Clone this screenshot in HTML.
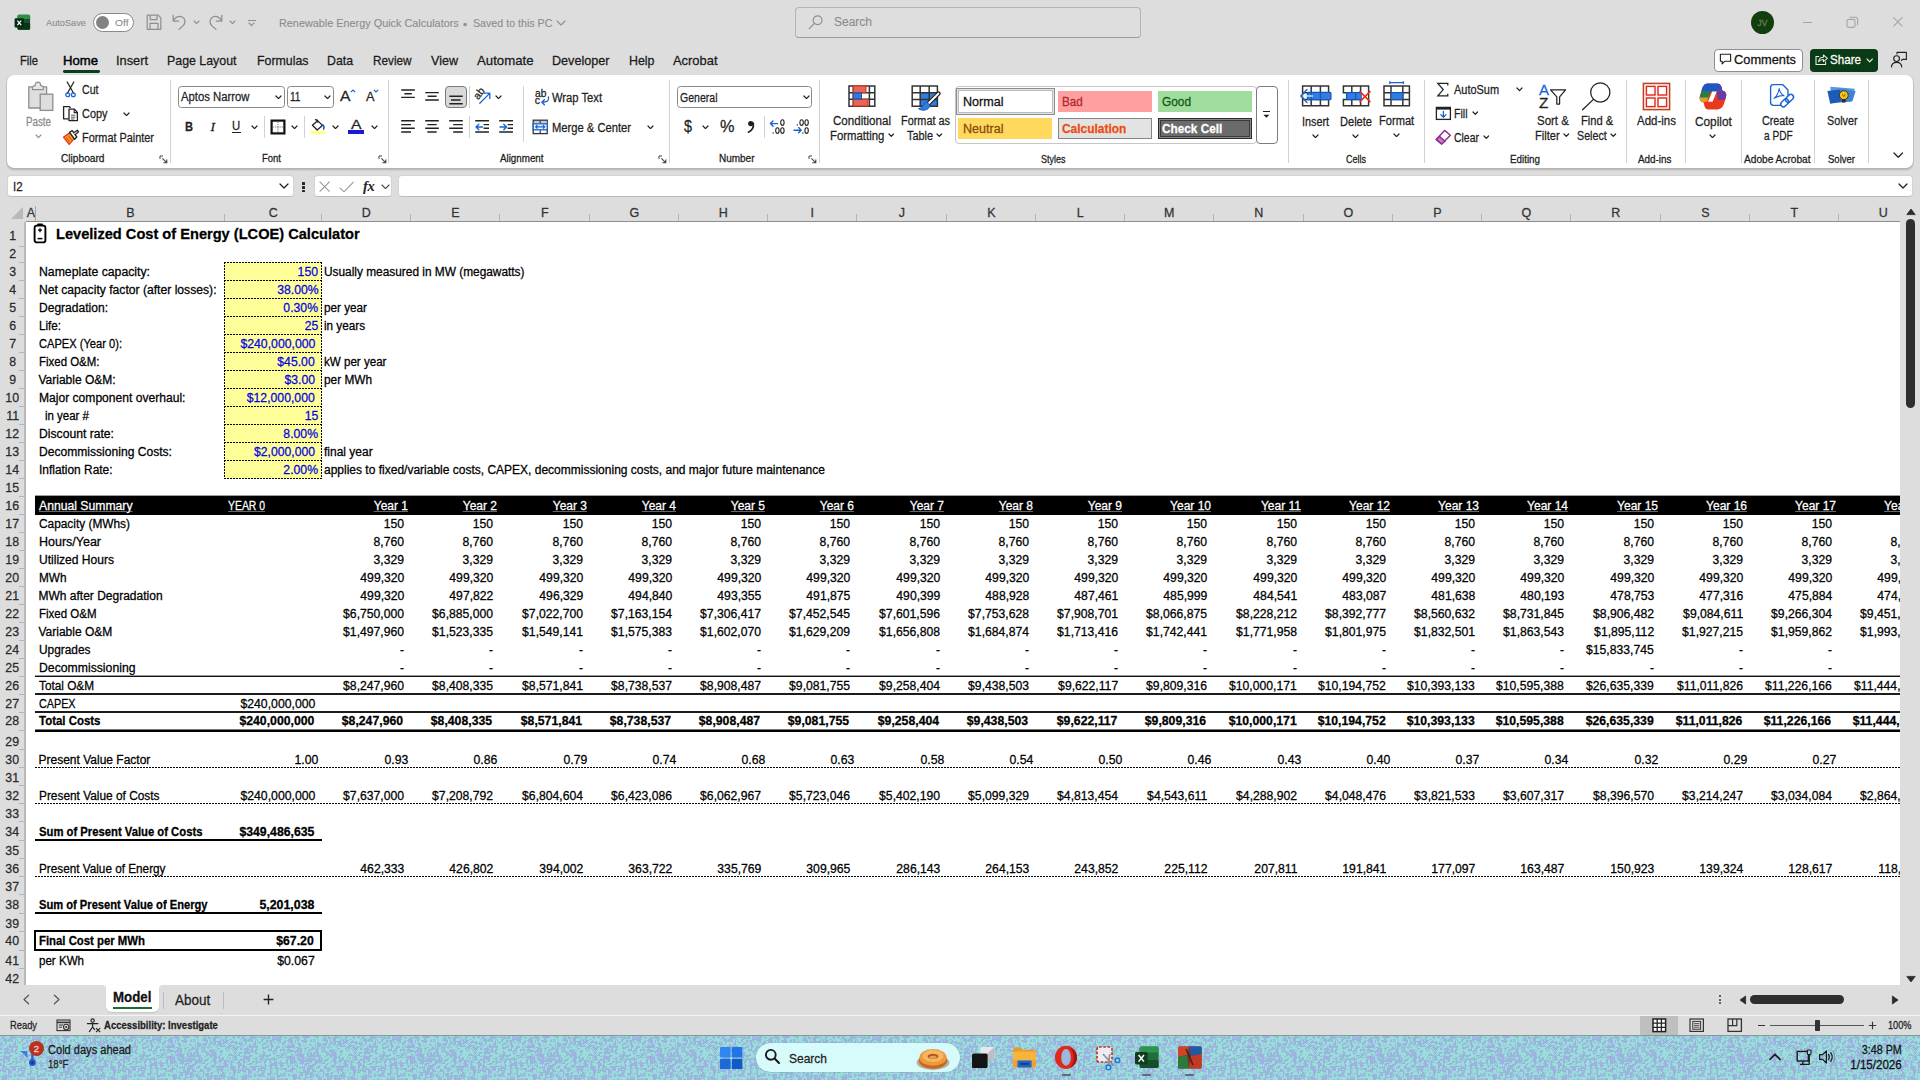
<!DOCTYPE html>
<html><head><meta charset="utf-8"><title>Renewable Energy Quick Calculators - Excel</title>
<style>
html,body{margin:0;padding:0}
body{width:1920px;height:1080px;overflow:hidden;position:relative;background:#dddddd;font-family:"Liberation Sans",sans-serif;color:#000}
.t{position:absolute;white-space:nowrap;line-height:1;display:block;-webkit-text-stroke:0.26px currentColor}
.b{position:absolute;box-sizing:border-box;display:block}
.s{position:absolute;overflow:hidden}
</style></head><body>

<div class="b" style="left:25px;top:222px;width:1875px;height:763px;background:#fff"></div>
<div class="b" style="left:0px;top:203px;width:1920px;height:19px;background:#dddddd"></div>
<div class="b" style="left:0px;top:221px;width:26px;height:764px;background:#dddddd"></div>
<div class="b" style="left:24px;top:222px;width:2px;height:763px;background:#b9b9b9"></div>
<div class="b" style="left:26px;top:221px;width:1874px;height:1px;background:#8e8e8e"></div>
<svg class="b" style="left:10px;top:206px" width="14" height="14" viewBox="0 0 14 14"><path d="M13 1 L13 13 L1 13 Z" fill="#b9b9b9"/></svg>
<span class="t" style="left:26.83px;top:207.02px;font-size:12.5px;color:#333">A</span>
<div class="b" style="left:35px;top:214px;width:1px;height:7px;background:#b4b4b4"></div>
<span class="t" style="left:126.13px;top:207.02px;font-size:12.5px;color:#333">B</span>
<div class="b" style="left:224px;top:214px;width:1px;height:7px;background:#b4b4b4"></div>
<span class="t" style="left:268.79px;top:207.02px;font-size:12.5px;color:#333">C</span>
<div class="b" style="left:321px;top:214px;width:1px;height:7px;background:#b4b4b4"></div>
<span class="t" style="left:361.79px;top:207.02px;font-size:12.5px;color:#333">D</span>
<div class="b" style="left:410px;top:214px;width:1px;height:7px;background:#b4b4b4"></div>
<span class="t" style="left:451.13px;top:207.02px;font-size:12.5px;color:#333">E</span>
<div class="b" style="left:499px;top:214px;width:1px;height:7px;background:#b4b4b4"></div>
<span class="t" style="left:540.98px;top:207.02px;font-size:12.5px;color:#333">F</span>
<div class="b" style="left:589px;top:214px;width:1px;height:7px;background:#b4b4b4"></div>
<span class="t" style="left:629.44px;top:207.02px;font-size:12.5px;color:#333">G</span>
<div class="b" style="left:678px;top:214px;width:1px;height:7px;background:#b4b4b4"></div>
<span class="t" style="left:718.79px;top:207.02px;font-size:12.5px;color:#333">H</span>
<div class="b" style="left:767px;top:214px;width:1px;height:7px;background:#b4b4b4"></div>
<span class="t" style="left:810.56px;top:207.02px;font-size:12.5px;color:#333">I</span>
<div class="b" style="left:856px;top:214px;width:1px;height:7px;background:#b4b4b4"></div>
<span class="t" style="left:898.67px;top:207.02px;font-size:12.5px;color:#333">J</span>
<div class="b" style="left:946px;top:214px;width:1px;height:7px;background:#b4b4b4"></div>
<span class="t" style="left:987.13px;top:207.02px;font-size:12.5px;color:#333">K</span>
<div class="b" style="left:1035px;top:214px;width:1px;height:7px;background:#b4b4b4"></div>
<span class="t" style="left:1076.82px;top:207.02px;font-size:12.5px;color:#333">L</span>
<div class="b" style="left:1124px;top:214px;width:1px;height:7px;background:#b4b4b4"></div>
<span class="t" style="left:1164.09px;top:207.02px;font-size:12.5px;color:#333">M</span>
<div class="b" style="left:1213px;top:214px;width:1px;height:7px;background:#b4b4b4"></div>
<span class="t" style="left:1254.29px;top:207.02px;font-size:12.5px;color:#333">N</span>
<div class="b" style="left:1303px;top:214px;width:1px;height:7px;background:#b4b4b4"></div>
<span class="t" style="left:1343.44px;top:207.02px;font-size:12.5px;color:#333">O</span>
<div class="b" style="left:1392px;top:214px;width:1px;height:7px;background:#b4b4b4"></div>
<span class="t" style="left:1433.13px;top:207.02px;font-size:12.5px;color:#333">P</span>
<div class="b" style="left:1481px;top:214px;width:1px;height:7px;background:#b4b4b4"></div>
<span class="t" style="left:1521.44px;top:207.02px;font-size:12.5px;color:#333">Q</span>
<div class="b" style="left:1570px;top:214px;width:1px;height:7px;background:#b4b4b4"></div>
<span class="t" style="left:1611.29px;top:207.02px;font-size:12.5px;color:#333">R</span>
<div class="b" style="left:1660px;top:214px;width:1px;height:7px;background:#b4b4b4"></div>
<span class="t" style="left:1701.13px;top:207.02px;font-size:12.5px;color:#333">S</span>
<div class="b" style="left:1749px;top:214px;width:1px;height:7px;background:#b4b4b4"></div>
<span class="t" style="left:1790.48px;top:207.02px;font-size:12.5px;color:#333">T</span>
<div class="b" style="left:1838px;top:214px;width:1px;height:7px;background:#b4b4b4"></div>
<span class="t" style="left:1878.79px;top:207.02px;font-size:12.5px;color:#333">U</span>
<div class="b" style="left:35px;top:206px;width:1px;height:15px;background:#a8a8a8"></div>
<span class="t" style="left:8.88px;top:229.02px;font-size:13px;color:#2a2a2a;transform:scaleX(0.950);transform-origin:50% 50%">1</span>
<div class="b" style="left:19px;top:246px;width:6px;height:1px;background:#b4b4b4"></div>
<span class="t" style="left:8.88px;top:247.02px;font-size:13px;color:#2a2a2a;transform:scaleX(0.950);transform-origin:50% 50%">2</span>
<div class="b" style="left:19px;top:262px;width:6px;height:1px;background:#b4b4b4"></div>
<span class="t" style="left:8.88px;top:265.02px;font-size:13px;color:#2a2a2a;transform:scaleX(0.950);transform-origin:50% 50%">3</span>
<div class="b" style="left:19px;top:280px;width:6px;height:1px;background:#b4b4b4"></div>
<span class="t" style="left:8.88px;top:283.02px;font-size:13px;color:#2a2a2a;transform:scaleX(0.950);transform-origin:50% 50%">4</span>
<div class="b" style="left:19px;top:298px;width:6px;height:1px;background:#b4b4b4"></div>
<span class="t" style="left:8.88px;top:301.02px;font-size:13px;color:#2a2a2a;transform:scaleX(0.950);transform-origin:50% 50%">5</span>
<div class="b" style="left:19px;top:316px;width:6px;height:1px;background:#b4b4b4"></div>
<span class="t" style="left:8.88px;top:319.02px;font-size:13px;color:#2a2a2a;transform:scaleX(0.950);transform-origin:50% 50%">6</span>
<div class="b" style="left:19px;top:334px;width:6px;height:1px;background:#b4b4b4"></div>
<span class="t" style="left:8.88px;top:337.02px;font-size:13px;color:#2a2a2a;transform:scaleX(0.950);transform-origin:50% 50%">7</span>
<div class="b" style="left:19px;top:352px;width:6px;height:1px;background:#b4b4b4"></div>
<span class="t" style="left:8.88px;top:355.02px;font-size:13px;color:#2a2a2a;transform:scaleX(0.950);transform-origin:50% 50%">8</span>
<div class="b" style="left:19px;top:370px;width:6px;height:1px;background:#b4b4b4"></div>
<span class="t" style="left:8.88px;top:373.02px;font-size:13px;color:#2a2a2a;transform:scaleX(0.950);transform-origin:50% 50%">9</span>
<div class="b" style="left:19px;top:388px;width:6px;height:1px;background:#b4b4b4"></div>
<span class="t" style="left:5.27px;top:391.02px;font-size:13px;color:#2a2a2a;transform:scaleX(0.950);transform-origin:50% 50%">10</span>
<div class="b" style="left:19px;top:406px;width:6px;height:1px;background:#b4b4b4"></div>
<span class="t" style="left:5.75px;top:409.02px;font-size:13px;color:#2a2a2a;transform:scaleX(0.950);transform-origin:50% 50%">11</span>
<div class="b" style="left:19px;top:424px;width:6px;height:1px;background:#b4b4b4"></div>
<span class="t" style="left:5.27px;top:427.02px;font-size:13px;color:#2a2a2a;transform:scaleX(0.950);transform-origin:50% 50%">12</span>
<div class="b" style="left:19px;top:442px;width:6px;height:1px;background:#b4b4b4"></div>
<span class="t" style="left:5.27px;top:445.02px;font-size:13px;color:#2a2a2a;transform:scaleX(0.950);transform-origin:50% 50%">13</span>
<div class="b" style="left:19px;top:460px;width:6px;height:1px;background:#b4b4b4"></div>
<span class="t" style="left:5.27px;top:463.02px;font-size:13px;color:#2a2a2a;transform:scaleX(0.950);transform-origin:50% 50%">14</span>
<div class="b" style="left:19px;top:478px;width:6px;height:1px;background:#b4b4b4"></div>
<span class="t" style="left:5.27px;top:481.02px;font-size:13px;color:#2a2a2a;transform:scaleX(0.950);transform-origin:50% 50%">15</span>
<div class="b" style="left:19px;top:496px;width:6px;height:1px;background:#b4b4b4"></div>
<span class="t" style="left:5.27px;top:499.02px;font-size:13px;color:#2a2a2a;transform:scaleX(0.950);transform-origin:50% 50%">16</span>
<div class="b" style="left:19px;top:514px;width:6px;height:1px;background:#b4b4b4"></div>
<span class="t" style="left:5.27px;top:517.02px;font-size:13px;color:#2a2a2a;transform:scaleX(0.950);transform-origin:50% 50%">17</span>
<div class="b" style="left:19px;top:532px;width:6px;height:1px;background:#b4b4b4"></div>
<span class="t" style="left:5.27px;top:535.02px;font-size:13px;color:#2a2a2a;transform:scaleX(0.950);transform-origin:50% 50%">18</span>
<div class="b" style="left:19px;top:550px;width:6px;height:1px;background:#b4b4b4"></div>
<span class="t" style="left:5.27px;top:553.02px;font-size:13px;color:#2a2a2a;transform:scaleX(0.950);transform-origin:50% 50%">19</span>
<div class="b" style="left:19px;top:568px;width:6px;height:1px;background:#b4b4b4"></div>
<span class="t" style="left:5.27px;top:571.02px;font-size:13px;color:#2a2a2a;transform:scaleX(0.950);transform-origin:50% 50%">20</span>
<div class="b" style="left:19px;top:586px;width:6px;height:1px;background:#b4b4b4"></div>
<span class="t" style="left:5.27px;top:589.02px;font-size:13px;color:#2a2a2a;transform:scaleX(0.950);transform-origin:50% 50%">21</span>
<div class="b" style="left:19px;top:604px;width:6px;height:1px;background:#b4b4b4"></div>
<span class="t" style="left:5.27px;top:607.02px;font-size:13px;color:#2a2a2a;transform:scaleX(0.950);transform-origin:50% 50%">22</span>
<div class="b" style="left:19px;top:622px;width:6px;height:1px;background:#b4b4b4"></div>
<span class="t" style="left:5.27px;top:625.02px;font-size:13px;color:#2a2a2a;transform:scaleX(0.950);transform-origin:50% 50%">23</span>
<div class="b" style="left:19px;top:640px;width:6px;height:1px;background:#b4b4b4"></div>
<span class="t" style="left:5.27px;top:643.02px;font-size:13px;color:#2a2a2a;transform:scaleX(0.950);transform-origin:50% 50%">24</span>
<div class="b" style="left:19px;top:658px;width:6px;height:1px;background:#b4b4b4"></div>
<span class="t" style="left:5.27px;top:661.02px;font-size:13px;color:#2a2a2a;transform:scaleX(0.950);transform-origin:50% 50%">25</span>
<div class="b" style="left:19px;top:676px;width:6px;height:1px;background:#b4b4b4"></div>
<span class="t" style="left:5.27px;top:679.02px;font-size:13px;color:#2a2a2a;transform:scaleX(0.950);transform-origin:50% 50%">26</span>
<div class="b" style="left:19px;top:694px;width:6px;height:1px;background:#b4b4b4"></div>
<span class="t" style="left:5.27px;top:697.02px;font-size:13px;color:#2a2a2a;transform:scaleX(0.950);transform-origin:50% 50%">27</span>
<div class="b" style="left:19px;top:712px;width:6px;height:1px;background:#b4b4b4"></div>
<span class="t" style="left:5.27px;top:714.02px;font-size:13px;color:#2a2a2a;transform:scaleX(0.950);transform-origin:50% 50%">28</span>
<div class="b" style="left:19px;top:730px;width:6px;height:1px;background:#b4b4b4"></div>
<span class="t" style="left:5.27px;top:735.02px;font-size:13px;color:#2a2a2a;transform:scaleX(0.950);transform-origin:50% 50%">29</span>
<div class="b" style="left:19px;top:749px;width:6px;height:1px;background:#b4b4b4"></div>
<span class="t" style="left:5.27px;top:753.02px;font-size:13px;color:#2a2a2a;transform:scaleX(0.950);transform-origin:50% 50%">30</span>
<div class="b" style="left:19px;top:767px;width:6px;height:1px;background:#b4b4b4"></div>
<span class="t" style="left:5.27px;top:771.02px;font-size:13px;color:#2a2a2a;transform:scaleX(0.950);transform-origin:50% 50%">31</span>
<div class="b" style="left:19px;top:785px;width:6px;height:1px;background:#b4b4b4"></div>
<span class="t" style="left:5.27px;top:789.02px;font-size:13px;color:#2a2a2a;transform:scaleX(0.950);transform-origin:50% 50%">32</span>
<div class="b" style="left:19px;top:803px;width:6px;height:1px;background:#b4b4b4"></div>
<span class="t" style="left:5.27px;top:807.02px;font-size:13px;color:#2a2a2a;transform:scaleX(0.950);transform-origin:50% 50%">33</span>
<div class="b" style="left:19px;top:821px;width:6px;height:1px;background:#b4b4b4"></div>
<span class="t" style="left:5.27px;top:825.02px;font-size:13px;color:#2a2a2a;transform:scaleX(0.950);transform-origin:50% 50%">34</span>
<div class="b" style="left:19px;top:840px;width:6px;height:1px;background:#b4b4b4"></div>
<span class="t" style="left:5.27px;top:844.02px;font-size:13px;color:#2a2a2a;transform:scaleX(0.950);transform-origin:50% 50%">35</span>
<div class="b" style="left:19px;top:858px;width:6px;height:1px;background:#b4b4b4"></div>
<span class="t" style="left:5.27px;top:862.02px;font-size:13px;color:#2a2a2a;transform:scaleX(0.950);transform-origin:50% 50%">36</span>
<div class="b" style="left:19px;top:876px;width:6px;height:1px;background:#b4b4b4"></div>
<span class="t" style="left:5.27px;top:880.02px;font-size:13px;color:#2a2a2a;transform:scaleX(0.950);transform-origin:50% 50%">37</span>
<div class="b" style="left:19px;top:894px;width:6px;height:1px;background:#b4b4b4"></div>
<span class="t" style="left:5.27px;top:898.02px;font-size:13px;color:#2a2a2a;transform:scaleX(0.950);transform-origin:50% 50%">38</span>
<div class="b" style="left:19px;top:913px;width:6px;height:1px;background:#b4b4b4"></div>
<span class="t" style="left:5.27px;top:917.02px;font-size:13px;color:#2a2a2a;transform:scaleX(0.950);transform-origin:50% 50%">39</span>
<div class="b" style="left:19px;top:931px;width:6px;height:1px;background:#b4b4b4"></div>
<span class="t" style="left:5.27px;top:934.02px;font-size:13px;color:#2a2a2a;transform:scaleX(0.950);transform-origin:50% 50%">40</span>
<div class="b" style="left:19px;top:950px;width:6px;height:1px;background:#b4b4b4"></div>
<span class="t" style="left:5.27px;top:954.02px;font-size:13px;color:#2a2a2a;transform:scaleX(0.950);transform-origin:50% 50%">41</span>
<div class="b" style="left:19px;top:968px;width:6px;height:1px;background:#b4b4b4"></div>
<span class="t" style="left:5.27px;top:972.02px;font-size:13px;color:#2a2a2a;transform:scaleX(0.950);transform-origin:50% 50%">42</span>
<div class="s" style="left:26px;top:222px;width:1874px;height:763px">
<div class="b" style="left:-26px;top:-222px;width:1920px;height:1080px">
<svg class="b" style="left:33px;top:223px" width="14" height="21" viewBox="0 0 14 21"><rect x="1.6" y="2.6" width="10.8" height="16.8" rx="2.2" fill="#fff" stroke="#000" stroke-width="1.9"/><rect x="4.2" y="0.4" width="5.6" height="2.6" rx="0.8" fill="#000"/><path d="M7 5.2v4M5 7.2h4" stroke="#000" stroke-width="1.3"/><path d="M4.6 15.6h4.8" stroke="#000" stroke-width="1.5"/></svg>
<span class="t" style="left:56px;top:226.22px;font-size:15px;font-weight:700;transform:scaleX(0.974);transform-origin:0 50%">Levelized Cost of Energy (LCOE) Calculator</span>
<span class="t" style="left:38.5px;top:266.02px;font-size:12px;transform:scaleX(1.021);transform-origin:0 50%">Nameplate capacity:</span>
<span class="t" style="left:38.5px;top:284.02px;font-size:12px;transform:scaleX(1.012);transform-origin:0 50%">Net capacity factor (after losses):</span>
<span class="t" style="left:38.5px;top:302.02px;font-size:12px;transform:scaleX(1.004);transform-origin:0 50%">Degradation:</span>
<span class="t" style="left:38.5px;top:320.02px;font-size:12px;transform:scaleX(0.970);transform-origin:0 50%">Life:</span>
<span class="t" style="left:38.5px;top:338.02px;font-size:12px;transform:scaleX(0.926);transform-origin:0 50%">CAPEX (Year 0):</span>
<span class="t" style="left:38.5px;top:356.02px;font-size:12px;transform:scaleX(0.955);transform-origin:0 50%">Fixed O&amp;M:</span>
<span class="t" style="left:38.5px;top:374.02px;font-size:12px">Variable O&amp;M:</span>
<span class="t" style="left:38.5px;top:392.02px;font-size:12px;transform:scaleX(1.007);transform-origin:0 50%">Major component overhaul:</span>
<span class="t" style="left:38.5px;top:428.02px;font-size:12px;transform:scaleX(1.013);transform-origin:0 50%">Discount rate:</span>
<span class="t" style="left:38.5px;top:446.02px;font-size:12px;transform:scaleX(1.007);transform-origin:0 50%">Decommissioning Costs:</span>
<span class="t" style="left:38.5px;top:464.02px;font-size:12px;transform:scaleX(0.993);transform-origin:0 50%">Inflation Rate:</span>
<span class="t" style="left:45px;top:410.02px;font-size:12px;transform:scaleX(0.956);transform-origin:0 50%">in year #</span>
<div class="b" style="left:224px;top:262px;width:98px;height:217px;background:#ffff99"></div>
<div class="b" style="left:224px;top:262px;width:98px;height:1px;background:repeating-linear-gradient(90deg,#000 0 2px,transparent 2px 3px)"></div>
<div class="b" style="left:224px;top:280px;width:98px;height:1px;background:repeating-linear-gradient(90deg,#000 0 2px,transparent 2px 3px)"></div>
<div class="b" style="left:224px;top:298px;width:98px;height:1px;background:repeating-linear-gradient(90deg,#000 0 2px,transparent 2px 3px)"></div>
<div class="b" style="left:224px;top:316px;width:98px;height:1px;background:repeating-linear-gradient(90deg,#000 0 2px,transparent 2px 3px)"></div>
<div class="b" style="left:224px;top:334px;width:98px;height:1px;background:repeating-linear-gradient(90deg,#000 0 2px,transparent 2px 3px)"></div>
<div class="b" style="left:224px;top:352px;width:98px;height:1px;background:repeating-linear-gradient(90deg,#000 0 2px,transparent 2px 3px)"></div>
<div class="b" style="left:224px;top:370px;width:98px;height:1px;background:repeating-linear-gradient(90deg,#000 0 2px,transparent 2px 3px)"></div>
<div class="b" style="left:224px;top:388px;width:98px;height:1px;background:repeating-linear-gradient(90deg,#000 0 2px,transparent 2px 3px)"></div>
<div class="b" style="left:224px;top:406px;width:98px;height:1px;background:repeating-linear-gradient(90deg,#000 0 2px,transparent 2px 3px)"></div>
<div class="b" style="left:224px;top:424px;width:98px;height:1px;background:repeating-linear-gradient(90deg,#000 0 2px,transparent 2px 3px)"></div>
<div class="b" style="left:224px;top:442px;width:98px;height:1px;background:repeating-linear-gradient(90deg,#000 0 2px,transparent 2px 3px)"></div>
<div class="b" style="left:224px;top:460px;width:98px;height:1px;background:repeating-linear-gradient(90deg,#000 0 2px,transparent 2px 3px)"></div>
<div class="b" style="left:224px;top:478px;width:98px;height:1px;background:repeating-linear-gradient(90deg,#000 0 2px,transparent 2px 3px)"></div>
<div class="b" style="left:224px;top:262px;width:1px;height:217px;background:repeating-linear-gradient(180deg,#000 0 2px,transparent 2px 3px)"></div>
<div class="b" style="left:321px;top:262px;width:1px;height:217px;background:repeating-linear-gradient(180deg,#000 0 2px,transparent 2px 3px)"></div>
<span class="t" style="right:1601.5px;top:266.02px;font-size:12px;color:#0606e0;transform:scaleX(1.020);transform-origin:100% 50%">150</span>
<span class="t" style="right:1601.5px;top:284.02px;font-size:12px;color:#0606e0;transform:scaleX(1.020);transform-origin:100% 50%">38.00%</span>
<span class="t" style="right:1601.5px;top:302.02px;font-size:12px;color:#0606e0;transform:scaleX(1.020);transform-origin:100% 50%">0.30%</span>
<span class="t" style="right:1601.5px;top:320.02px;font-size:12px;color:#0606e0;transform:scaleX(1.020);transform-origin:100% 50%">25</span>
<span class="t" style="right:1605px;top:338.02px;font-size:12px;color:#0606e0;transform:scaleX(1.022);transform-origin:100% 50%">$240,000,000</span>
<span class="t" style="right:1605px;top:356.02px;font-size:12px;color:#0606e0;transform:scaleX(1.020);transform-origin:100% 50%">$45.00</span>
<span class="t" style="right:1605px;top:374.02px;font-size:12px;color:#0606e0;transform:scaleX(1.020);transform-origin:100% 50%">$3.00</span>
<span class="t" style="right:1605px;top:392.02px;font-size:12px;color:#0606e0;transform:scaleX(1.019);transform-origin:100% 50%">$12,000,000</span>
<span class="t" style="right:1601.5px;top:410.02px;font-size:12px;color:#0606e0;transform:scaleX(1.020);transform-origin:100% 50%">15</span>
<span class="t" style="right:1601.5px;top:428.02px;font-size:12px;color:#0606e0;transform:scaleX(1.020);transform-origin:100% 50%">8.00%</span>
<span class="t" style="right:1605px;top:446.02px;font-size:12px;color:#0606e0;transform:scaleX(1.016);transform-origin:100% 50%">$2,000,000</span>
<span class="t" style="right:1601.5px;top:464.02px;font-size:12px;color:#0606e0;transform:scaleX(1.020);transform-origin:100% 50%">2.00%</span>
<span class="t" style="left:324px;top:266.02px;font-size:12px;transform:scaleX(0.989);transform-origin:0 50%">Usually measured in MW (megawatts)</span>
<span class="t" style="left:324px;top:302.02px;font-size:12px;transform:scaleX(0.977);transform-origin:0 50%">per year</span>
<span class="t" style="left:324px;top:320.02px;font-size:12px;transform:scaleX(0.976);transform-origin:0 50%">in years</span>
<span class="t" style="left:324px;top:356.02px;font-size:12px;transform:scaleX(0.966);transform-origin:0 50%">kW per year</span>
<span class="t" style="left:324px;top:374.02px;font-size:12px;transform:scaleX(0.986);transform-origin:0 50%">per MWh</span>
<span class="t" style="left:324px;top:446.02px;font-size:12px">final year</span>
<span class="t" style="left:324px;top:464.02px;font-size:12px">applies to fixed/variable costs, CAPEX, decommissioning costs, and major future maintenance</span>
<div class="b" style="left:35px;top:495px;width:1865px;height:1px;background:#9c9c9c"></div>
<div class="b" style="left:35px;top:496px;width:1865px;height:19px;background:#000"></div>
<span class="t" style="left:38.5px;top:500.02px;font-size:12px;color:#fff;text-decoration:underline;text-decoration-color:#666;text-decoration-thickness:1px;text-underline-offset:0.5px;transform:scaleX(1.016);transform-origin:0 50%">Annual Summary</span>
<span class="t" style="left:227.5px;top:500.02px;font-size:12px;color:#fff;text-decoration:underline;text-decoration-color:#666;text-decoration-thickness:1px;text-underline-offset:0.5px;transform:scaleX(0.867);transform-origin:0 50%">YEAR 0</span>
<span class="t" style="right:1512px;top:500.02px;font-size:12px;color:#fff;text-decoration:underline;text-decoration-color:#666;text-decoration-thickness:1px;text-underline-offset:0.5px">Year 1</span>
<span class="t" style="right:1423px;top:500.02px;font-size:12px;color:#fff;text-decoration:underline;text-decoration-color:#666;text-decoration-thickness:1px;text-underline-offset:0.5px">Year 2</span>
<span class="t" style="right:1333px;top:500.02px;font-size:12px;color:#fff;text-decoration:underline;text-decoration-color:#666;text-decoration-thickness:1px;text-underline-offset:0.5px">Year 3</span>
<span class="t" style="right:1244px;top:500.02px;font-size:12px;color:#fff;text-decoration:underline;text-decoration-color:#666;text-decoration-thickness:1px;text-underline-offset:0.5px">Year 4</span>
<span class="t" style="right:1155px;top:500.02px;font-size:12px;color:#fff;text-decoration:underline;text-decoration-color:#666;text-decoration-thickness:1px;text-underline-offset:0.5px">Year 5</span>
<span class="t" style="right:1066px;top:500.02px;font-size:12px;color:#fff;text-decoration:underline;text-decoration-color:#666;text-decoration-thickness:1px;text-underline-offset:0.5px">Year 6</span>
<span class="t" style="right:976px;top:500.02px;font-size:12px;color:#fff;text-decoration:underline;text-decoration-color:#666;text-decoration-thickness:1px;text-underline-offset:0.5px">Year 7</span>
<span class="t" style="right:887px;top:500.02px;font-size:12px;color:#fff;text-decoration:underline;text-decoration-color:#666;text-decoration-thickness:1px;text-underline-offset:0.5px">Year 8</span>
<span class="t" style="right:798px;top:500.02px;font-size:12px;color:#fff;text-decoration:underline;text-decoration-color:#666;text-decoration-thickness:1px;text-underline-offset:0.5px">Year 9</span>
<span class="t" style="right:709px;top:500.02px;font-size:12px;color:#fff;text-decoration:underline;text-decoration-color:#666;text-decoration-thickness:1px;text-underline-offset:0.5px">Year 10</span>
<span class="t" style="right:619px;top:500.02px;font-size:12px;color:#fff;text-decoration:underline;text-decoration-color:#666;text-decoration-thickness:1px;text-underline-offset:0.5px">Year 11</span>
<span class="t" style="right:530px;top:500.02px;font-size:12px;color:#fff;text-decoration:underline;text-decoration-color:#666;text-decoration-thickness:1px;text-underline-offset:0.5px">Year 12</span>
<span class="t" style="right:441px;top:500.02px;font-size:12px;color:#fff;text-decoration:underline;text-decoration-color:#666;text-decoration-thickness:1px;text-underline-offset:0.5px">Year 13</span>
<span class="t" style="right:352px;top:500.02px;font-size:12px;color:#fff;text-decoration:underline;text-decoration-color:#666;text-decoration-thickness:1px;text-underline-offset:0.5px">Year 14</span>
<span class="t" style="right:262px;top:500.02px;font-size:12px;color:#fff;text-decoration:underline;text-decoration-color:#666;text-decoration-thickness:1px;text-underline-offset:0.5px">Year 15</span>
<span class="t" style="right:173px;top:500.02px;font-size:12px;color:#fff;text-decoration:underline;text-decoration-color:#666;text-decoration-thickness:1px;text-underline-offset:0.5px">Year 16</span>
<span class="t" style="right:84px;top:500.02px;font-size:12px;color:#fff;text-decoration:underline;text-decoration-color:#666;text-decoration-thickness:1px;text-underline-offset:0.5px">Year 17</span>
<span class="t" style="right:-5px;top:500.02px;font-size:12px;color:#fff;text-decoration:underline;text-decoration-color:#666;text-decoration-thickness:1px;text-underline-offset:0.5px">Year 18</span>
<span class="t" style="left:38.5px;top:518.02px;font-size:12px;transform:scaleX(0.989);transform-origin:0 50%">Capacity (MWhs)</span>
<span class="t" style="right:1516px;top:518.02px;font-size:12px;transform:scaleX(1.015);transform-origin:100% 50%">150</span>
<span class="t" style="right:1427px;top:518.02px;font-size:12px;transform:scaleX(1.015);transform-origin:100% 50%">150</span>
<span class="t" style="right:1337px;top:518.02px;font-size:12px;transform:scaleX(1.015);transform-origin:100% 50%">150</span>
<span class="t" style="right:1248px;top:518.02px;font-size:12px;transform:scaleX(1.015);transform-origin:100% 50%">150</span>
<span class="t" style="right:1159px;top:518.02px;font-size:12px;transform:scaleX(1.015);transform-origin:100% 50%">150</span>
<span class="t" style="right:1070px;top:518.02px;font-size:12px;transform:scaleX(1.015);transform-origin:100% 50%">150</span>
<span class="t" style="right:980px;top:518.02px;font-size:12px;transform:scaleX(1.015);transform-origin:100% 50%">150</span>
<span class="t" style="right:891px;top:518.02px;font-size:12px;transform:scaleX(1.015);transform-origin:100% 50%">150</span>
<span class="t" style="right:802px;top:518.02px;font-size:12px;transform:scaleX(1.015);transform-origin:100% 50%">150</span>
<span class="t" style="right:713px;top:518.02px;font-size:12px;transform:scaleX(1.015);transform-origin:100% 50%">150</span>
<span class="t" style="right:623px;top:518.02px;font-size:12px;transform:scaleX(1.015);transform-origin:100% 50%">150</span>
<span class="t" style="right:534px;top:518.02px;font-size:12px;transform:scaleX(1.015);transform-origin:100% 50%">150</span>
<span class="t" style="right:445px;top:518.02px;font-size:12px;transform:scaleX(1.015);transform-origin:100% 50%">150</span>
<span class="t" style="right:356px;top:518.02px;font-size:12px;transform:scaleX(1.015);transform-origin:100% 50%">150</span>
<span class="t" style="right:266px;top:518.02px;font-size:12px;transform:scaleX(1.015);transform-origin:100% 50%">150</span>
<span class="t" style="right:177px;top:518.02px;font-size:12px;transform:scaleX(1.015);transform-origin:100% 50%">150</span>
<span class="t" style="right:88px;top:518.02px;font-size:12px;transform:scaleX(1.015);transform-origin:100% 50%">150</span>
<span class="t" style="right:-1px;top:518.02px;font-size:12px;transform:scaleX(1.015);transform-origin:100% 50%">150</span>
<span class="t" style="left:38.5px;top:536.02px;font-size:12px;transform:scaleX(1.040);transform-origin:0 50%">Hours/Year</span>
<span class="t" style="right:1516px;top:536.02px;font-size:12px;transform:scaleX(1.015);transform-origin:100% 50%">8,760</span>
<span class="t" style="right:1427px;top:536.02px;font-size:12px;transform:scaleX(1.015);transform-origin:100% 50%">8,760</span>
<span class="t" style="right:1337px;top:536.02px;font-size:12px;transform:scaleX(1.015);transform-origin:100% 50%">8,760</span>
<span class="t" style="right:1248px;top:536.02px;font-size:12px;transform:scaleX(1.015);transform-origin:100% 50%">8,760</span>
<span class="t" style="right:1159px;top:536.02px;font-size:12px;transform:scaleX(1.015);transform-origin:100% 50%">8,760</span>
<span class="t" style="right:1070px;top:536.02px;font-size:12px;transform:scaleX(1.015);transform-origin:100% 50%">8,760</span>
<span class="t" style="right:980px;top:536.02px;font-size:12px;transform:scaleX(1.015);transform-origin:100% 50%">8,760</span>
<span class="t" style="right:891px;top:536.02px;font-size:12px;transform:scaleX(1.015);transform-origin:100% 50%">8,760</span>
<span class="t" style="right:802px;top:536.02px;font-size:12px;transform:scaleX(1.015);transform-origin:100% 50%">8,760</span>
<span class="t" style="right:713px;top:536.02px;font-size:12px;transform:scaleX(1.015);transform-origin:100% 50%">8,760</span>
<span class="t" style="right:623px;top:536.02px;font-size:12px;transform:scaleX(1.015);transform-origin:100% 50%">8,760</span>
<span class="t" style="right:534px;top:536.02px;font-size:12px;transform:scaleX(1.015);transform-origin:100% 50%">8,760</span>
<span class="t" style="right:445px;top:536.02px;font-size:12px;transform:scaleX(1.015);transform-origin:100% 50%">8,760</span>
<span class="t" style="right:356px;top:536.02px;font-size:12px;transform:scaleX(1.015);transform-origin:100% 50%">8,760</span>
<span class="t" style="right:266px;top:536.02px;font-size:12px;transform:scaleX(1.015);transform-origin:100% 50%">8,760</span>
<span class="t" style="right:177px;top:536.02px;font-size:12px;transform:scaleX(1.015);transform-origin:100% 50%">8,760</span>
<span class="t" style="right:88px;top:536.02px;font-size:12px;transform:scaleX(1.015);transform-origin:100% 50%">8,760</span>
<span class="t" style="right:-1px;top:536.02px;font-size:12px;transform:scaleX(1.015);transform-origin:100% 50%">8,760</span>
<span class="t" style="left:38.5px;top:554.02px;font-size:12px;transform:scaleX(1.004);transform-origin:0 50%">Utilized Hours</span>
<span class="t" style="right:1516px;top:554.02px;font-size:12px;transform:scaleX(1.015);transform-origin:100% 50%">3,329</span>
<span class="t" style="right:1427px;top:554.02px;font-size:12px;transform:scaleX(1.015);transform-origin:100% 50%">3,329</span>
<span class="t" style="right:1337px;top:554.02px;font-size:12px;transform:scaleX(1.015);transform-origin:100% 50%">3,329</span>
<span class="t" style="right:1248px;top:554.02px;font-size:12px;transform:scaleX(1.015);transform-origin:100% 50%">3,329</span>
<span class="t" style="right:1159px;top:554.02px;font-size:12px;transform:scaleX(1.015);transform-origin:100% 50%">3,329</span>
<span class="t" style="right:1070px;top:554.02px;font-size:12px;transform:scaleX(1.015);transform-origin:100% 50%">3,329</span>
<span class="t" style="right:980px;top:554.02px;font-size:12px;transform:scaleX(1.015);transform-origin:100% 50%">3,329</span>
<span class="t" style="right:891px;top:554.02px;font-size:12px;transform:scaleX(1.015);transform-origin:100% 50%">3,329</span>
<span class="t" style="right:802px;top:554.02px;font-size:12px;transform:scaleX(1.015);transform-origin:100% 50%">3,329</span>
<span class="t" style="right:713px;top:554.02px;font-size:12px;transform:scaleX(1.015);transform-origin:100% 50%">3,329</span>
<span class="t" style="right:623px;top:554.02px;font-size:12px;transform:scaleX(1.015);transform-origin:100% 50%">3,329</span>
<span class="t" style="right:534px;top:554.02px;font-size:12px;transform:scaleX(1.015);transform-origin:100% 50%">3,329</span>
<span class="t" style="right:445px;top:554.02px;font-size:12px;transform:scaleX(1.015);transform-origin:100% 50%">3,329</span>
<span class="t" style="right:356px;top:554.02px;font-size:12px;transform:scaleX(1.015);transform-origin:100% 50%">3,329</span>
<span class="t" style="right:266px;top:554.02px;font-size:12px;transform:scaleX(1.015);transform-origin:100% 50%">3,329</span>
<span class="t" style="right:177px;top:554.02px;font-size:12px;transform:scaleX(1.015);transform-origin:100% 50%">3,329</span>
<span class="t" style="right:88px;top:554.02px;font-size:12px;transform:scaleX(1.015);transform-origin:100% 50%">3,329</span>
<span class="t" style="right:-1px;top:554.02px;font-size:12px;transform:scaleX(1.015);transform-origin:100% 50%">3,329</span>
<span class="t" style="left:38.5px;top:572.02px;font-size:12px;transform:scaleX(0.982);transform-origin:0 50%">MWh</span>
<span class="t" style="right:1516px;top:572.02px;font-size:12px;transform:scaleX(1.015);transform-origin:100% 50%">499,320</span>
<span class="t" style="right:1427px;top:572.02px;font-size:12px;transform:scaleX(1.015);transform-origin:100% 50%">499,320</span>
<span class="t" style="right:1337px;top:572.02px;font-size:12px;transform:scaleX(1.015);transform-origin:100% 50%">499,320</span>
<span class="t" style="right:1248px;top:572.02px;font-size:12px;transform:scaleX(1.015);transform-origin:100% 50%">499,320</span>
<span class="t" style="right:1159px;top:572.02px;font-size:12px;transform:scaleX(1.015);transform-origin:100% 50%">499,320</span>
<span class="t" style="right:1070px;top:572.02px;font-size:12px;transform:scaleX(1.015);transform-origin:100% 50%">499,320</span>
<span class="t" style="right:980px;top:572.02px;font-size:12px;transform:scaleX(1.015);transform-origin:100% 50%">499,320</span>
<span class="t" style="right:891px;top:572.02px;font-size:12px;transform:scaleX(1.015);transform-origin:100% 50%">499,320</span>
<span class="t" style="right:802px;top:572.02px;font-size:12px;transform:scaleX(1.015);transform-origin:100% 50%">499,320</span>
<span class="t" style="right:713px;top:572.02px;font-size:12px;transform:scaleX(1.015);transform-origin:100% 50%">499,320</span>
<span class="t" style="right:623px;top:572.02px;font-size:12px;transform:scaleX(1.015);transform-origin:100% 50%">499,320</span>
<span class="t" style="right:534px;top:572.02px;font-size:12px;transform:scaleX(1.015);transform-origin:100% 50%">499,320</span>
<span class="t" style="right:445px;top:572.02px;font-size:12px;transform:scaleX(1.015);transform-origin:100% 50%">499,320</span>
<span class="t" style="right:356px;top:572.02px;font-size:12px;transform:scaleX(1.015);transform-origin:100% 50%">499,320</span>
<span class="t" style="right:266px;top:572.02px;font-size:12px;transform:scaleX(1.015);transform-origin:100% 50%">499,320</span>
<span class="t" style="right:177px;top:572.02px;font-size:12px;transform:scaleX(1.015);transform-origin:100% 50%">499,320</span>
<span class="t" style="right:88px;top:572.02px;font-size:12px;transform:scaleX(1.015);transform-origin:100% 50%">499,320</span>
<span class="t" style="right:-1px;top:572.02px;font-size:12px;transform:scaleX(1.015);transform-origin:100% 50%">499,320</span>
<span class="t" style="left:38.5px;top:590.02px;font-size:12px">MWh after Degradation</span>
<span class="t" style="right:1516px;top:590.02px;font-size:12px;transform:scaleX(1.015);transform-origin:100% 50%">499,320</span>
<span class="t" style="right:1427px;top:590.02px;font-size:12px;transform:scaleX(1.015);transform-origin:100% 50%">497,822</span>
<span class="t" style="right:1337px;top:590.02px;font-size:12px;transform:scaleX(1.015);transform-origin:100% 50%">496,329</span>
<span class="t" style="right:1248px;top:590.02px;font-size:12px;transform:scaleX(1.015);transform-origin:100% 50%">494,840</span>
<span class="t" style="right:1159px;top:590.02px;font-size:12px;transform:scaleX(1.015);transform-origin:100% 50%">493,355</span>
<span class="t" style="right:1070px;top:590.02px;font-size:12px;transform:scaleX(1.015);transform-origin:100% 50%">491,875</span>
<span class="t" style="right:980px;top:590.02px;font-size:12px;transform:scaleX(1.015);transform-origin:100% 50%">490,399</span>
<span class="t" style="right:891px;top:590.02px;font-size:12px;transform:scaleX(1.015);transform-origin:100% 50%">488,928</span>
<span class="t" style="right:802px;top:590.02px;font-size:12px;transform:scaleX(1.015);transform-origin:100% 50%">487,461</span>
<span class="t" style="right:713px;top:590.02px;font-size:12px;transform:scaleX(1.015);transform-origin:100% 50%">485,999</span>
<span class="t" style="right:623px;top:590.02px;font-size:12px;transform:scaleX(1.015);transform-origin:100% 50%">484,541</span>
<span class="t" style="right:534px;top:590.02px;font-size:12px;transform:scaleX(1.015);transform-origin:100% 50%">483,087</span>
<span class="t" style="right:445px;top:590.02px;font-size:12px;transform:scaleX(1.015);transform-origin:100% 50%">481,638</span>
<span class="t" style="right:356px;top:590.02px;font-size:12px;transform:scaleX(1.015);transform-origin:100% 50%">480,193</span>
<span class="t" style="right:266px;top:590.02px;font-size:12px;transform:scaleX(1.015);transform-origin:100% 50%">478,753</span>
<span class="t" style="right:177px;top:590.02px;font-size:12px;transform:scaleX(1.015);transform-origin:100% 50%">477,316</span>
<span class="t" style="right:88px;top:590.02px;font-size:12px;transform:scaleX(1.015);transform-origin:100% 50%">475,884</span>
<span class="t" style="right:-1px;top:590.02px;font-size:12px;transform:scaleX(1.015);transform-origin:100% 50%">474,457</span>
<span class="t" style="left:38.5px;top:608.02px;font-size:12px;transform:scaleX(0.958);transform-origin:0 50%">Fixed O&amp;M</span>
<span class="t" style="right:1516px;top:608.02px;font-size:12px;transform:scaleX(1.015);transform-origin:100% 50%">$6,750,000</span>
<span class="t" style="right:1427px;top:608.02px;font-size:12px;transform:scaleX(1.015);transform-origin:100% 50%">$6,885,000</span>
<span class="t" style="right:1337px;top:608.02px;font-size:12px;transform:scaleX(1.015);transform-origin:100% 50%">$7,022,700</span>
<span class="t" style="right:1248px;top:608.02px;font-size:12px;transform:scaleX(1.015);transform-origin:100% 50%">$7,163,154</span>
<span class="t" style="right:1159px;top:608.02px;font-size:12px;transform:scaleX(1.015);transform-origin:100% 50%">$7,306,417</span>
<span class="t" style="right:1070px;top:608.02px;font-size:12px;transform:scaleX(1.015);transform-origin:100% 50%">$7,452,545</span>
<span class="t" style="right:980px;top:608.02px;font-size:12px;transform:scaleX(1.015);transform-origin:100% 50%">$7,601,596</span>
<span class="t" style="right:891px;top:608.02px;font-size:12px;transform:scaleX(1.015);transform-origin:100% 50%">$7,753,628</span>
<span class="t" style="right:802px;top:608.02px;font-size:12px;transform:scaleX(1.015);transform-origin:100% 50%">$7,908,701</span>
<span class="t" style="right:713px;top:608.02px;font-size:12px;transform:scaleX(1.015);transform-origin:100% 50%">$8,066,875</span>
<span class="t" style="right:623px;top:608.02px;font-size:12px;transform:scaleX(1.015);transform-origin:100% 50%">$8,228,212</span>
<span class="t" style="right:534px;top:608.02px;font-size:12px;transform:scaleX(1.015);transform-origin:100% 50%">$8,392,777</span>
<span class="t" style="right:445px;top:608.02px;font-size:12px;transform:scaleX(1.015);transform-origin:100% 50%">$8,560,632</span>
<span class="t" style="right:356px;top:608.02px;font-size:12px;transform:scaleX(1.015);transform-origin:100% 50%">$8,731,845</span>
<span class="t" style="right:266px;top:608.02px;font-size:12px;transform:scaleX(1.015);transform-origin:100% 50%">$8,906,482</span>
<span class="t" style="right:177px;top:608.02px;font-size:12px;transform:scaleX(1.015);transform-origin:100% 50%">$9,084,611</span>
<span class="t" style="right:88px;top:608.02px;font-size:12px;transform:scaleX(1.015);transform-origin:100% 50%">$9,266,304</span>
<span class="t" style="right:-1px;top:608.02px;font-size:12px;transform:scaleX(1.015);transform-origin:100% 50%">$9,451,630</span>
<span class="t" style="left:38.5px;top:626.02px;font-size:12px">Variable O&amp;M</span>
<span class="t" style="right:1516px;top:626.02px;font-size:12px;transform:scaleX(1.015);transform-origin:100% 50%">$1,497,960</span>
<span class="t" style="right:1427px;top:626.02px;font-size:12px;transform:scaleX(1.015);transform-origin:100% 50%">$1,523,335</span>
<span class="t" style="right:1337px;top:626.02px;font-size:12px;transform:scaleX(1.015);transform-origin:100% 50%">$1,549,141</span>
<span class="t" style="right:1248px;top:626.02px;font-size:12px;transform:scaleX(1.015);transform-origin:100% 50%">$1,575,383</span>
<span class="t" style="right:1159px;top:626.02px;font-size:12px;transform:scaleX(1.015);transform-origin:100% 50%">$1,602,070</span>
<span class="t" style="right:1070px;top:626.02px;font-size:12px;transform:scaleX(1.015);transform-origin:100% 50%">$1,629,209</span>
<span class="t" style="right:980px;top:626.02px;font-size:12px;transform:scaleX(1.015);transform-origin:100% 50%">$1,656,808</span>
<span class="t" style="right:891px;top:626.02px;font-size:12px;transform:scaleX(1.015);transform-origin:100% 50%">$1,684,874</span>
<span class="t" style="right:802px;top:626.02px;font-size:12px;transform:scaleX(1.015);transform-origin:100% 50%">$1,713,416</span>
<span class="t" style="right:713px;top:626.02px;font-size:12px;transform:scaleX(1.015);transform-origin:100% 50%">$1,742,441</span>
<span class="t" style="right:623px;top:626.02px;font-size:12px;transform:scaleX(1.015);transform-origin:100% 50%">$1,771,958</span>
<span class="t" style="right:534px;top:626.02px;font-size:12px;transform:scaleX(1.015);transform-origin:100% 50%">$1,801,975</span>
<span class="t" style="right:445px;top:626.02px;font-size:12px;transform:scaleX(1.015);transform-origin:100% 50%">$1,832,501</span>
<span class="t" style="right:356px;top:626.02px;font-size:12px;transform:scaleX(1.015);transform-origin:100% 50%">$1,863,543</span>
<span class="t" style="right:266px;top:626.02px;font-size:12px;transform:scaleX(1.015);transform-origin:100% 50%">$1,895,112</span>
<span class="t" style="right:177px;top:626.02px;font-size:12px;transform:scaleX(1.015);transform-origin:100% 50%">$1,927,215</span>
<span class="t" style="right:88px;top:626.02px;font-size:12px;transform:scaleX(1.015);transform-origin:100% 50%">$1,959,862</span>
<span class="t" style="right:-1px;top:626.02px;font-size:12px;transform:scaleX(1.015);transform-origin:100% 50%">$1,993,063</span>
<span class="t" style="left:38.5px;top:644.02px;font-size:12px;transform:scaleX(0.990);transform-origin:0 50%">Upgrades</span>
<span class="t" style="right:1516px;top:644.02px;font-size:12px">-</span>
<span class="t" style="right:1427px;top:644.02px;font-size:12px">-</span>
<span class="t" style="right:1337px;top:644.02px;font-size:12px">-</span>
<span class="t" style="right:1248px;top:644.02px;font-size:12px">-</span>
<span class="t" style="right:1159px;top:644.02px;font-size:12px">-</span>
<span class="t" style="right:1070px;top:644.02px;font-size:12px">-</span>
<span class="t" style="right:980px;top:644.02px;font-size:12px">-</span>
<span class="t" style="right:891px;top:644.02px;font-size:12px">-</span>
<span class="t" style="right:802px;top:644.02px;font-size:12px">-</span>
<span class="t" style="right:713px;top:644.02px;font-size:12px">-</span>
<span class="t" style="right:623px;top:644.02px;font-size:12px">-</span>
<span class="t" style="right:534px;top:644.02px;font-size:12px">-</span>
<span class="t" style="right:445px;top:644.02px;font-size:12px">-</span>
<span class="t" style="right:356px;top:644.02px;font-size:12px">-</span>
<span class="t" style="right:266px;top:644.02px;font-size:12px;transform:scaleX(1.015);transform-origin:100% 50%">$15,833,745</span>
<span class="t" style="right:177px;top:644.02px;font-size:12px">-</span>
<span class="t" style="right:88px;top:644.02px;font-size:12px">-</span>
<span class="t" style="right:-1px;top:644.02px;font-size:12px">-</span>
<span class="t" style="left:38.5px;top:662.02px;font-size:12px;transform:scaleX(1.019);transform-origin:0 50%">Decommissioning</span>
<span class="t" style="right:1516px;top:662.02px;font-size:12px">-</span>
<span class="t" style="right:1427px;top:662.02px;font-size:12px">-</span>
<span class="t" style="right:1337px;top:662.02px;font-size:12px">-</span>
<span class="t" style="right:1248px;top:662.02px;font-size:12px">-</span>
<span class="t" style="right:1159px;top:662.02px;font-size:12px">-</span>
<span class="t" style="right:1070px;top:662.02px;font-size:12px">-</span>
<span class="t" style="right:980px;top:662.02px;font-size:12px">-</span>
<span class="t" style="right:891px;top:662.02px;font-size:12px">-</span>
<span class="t" style="right:802px;top:662.02px;font-size:12px">-</span>
<span class="t" style="right:713px;top:662.02px;font-size:12px">-</span>
<span class="t" style="right:623px;top:662.02px;font-size:12px">-</span>
<span class="t" style="right:534px;top:662.02px;font-size:12px">-</span>
<span class="t" style="right:445px;top:662.02px;font-size:12px">-</span>
<span class="t" style="right:356px;top:662.02px;font-size:12px">-</span>
<span class="t" style="right:266px;top:662.02px;font-size:12px">-</span>
<span class="t" style="right:177px;top:662.02px;font-size:12px">-</span>
<span class="t" style="right:88px;top:662.02px;font-size:12px">-</span>
<span class="t" style="right:-1px;top:662.02px;font-size:12px">-</span>
<span class="t" style="left:38.5px;top:680.02px;font-size:12px;transform:scaleX(0.982);transform-origin:0 50%">Total O&amp;M</span>
<span class="t" style="right:1516px;top:680.02px;font-size:12px;transform:scaleX(1.015);transform-origin:100% 50%">$8,247,960</span>
<span class="t" style="right:1427px;top:680.02px;font-size:12px;transform:scaleX(1.015);transform-origin:100% 50%">$8,408,335</span>
<span class="t" style="right:1337px;top:680.02px;font-size:12px;transform:scaleX(1.015);transform-origin:100% 50%">$8,571,841</span>
<span class="t" style="right:1248px;top:680.02px;font-size:12px;transform:scaleX(1.015);transform-origin:100% 50%">$8,738,537</span>
<span class="t" style="right:1159px;top:680.02px;font-size:12px;transform:scaleX(1.015);transform-origin:100% 50%">$8,908,487</span>
<span class="t" style="right:1070px;top:680.02px;font-size:12px;transform:scaleX(1.015);transform-origin:100% 50%">$9,081,755</span>
<span class="t" style="right:980px;top:680.02px;font-size:12px;transform:scaleX(1.015);transform-origin:100% 50%">$9,258,404</span>
<span class="t" style="right:891px;top:680.02px;font-size:12px;transform:scaleX(1.015);transform-origin:100% 50%">$9,438,503</span>
<span class="t" style="right:802px;top:680.02px;font-size:12px;transform:scaleX(1.015);transform-origin:100% 50%">$9,622,117</span>
<span class="t" style="right:713px;top:680.02px;font-size:12px;transform:scaleX(1.015);transform-origin:100% 50%">$9,809,316</span>
<span class="t" style="right:623px;top:680.02px;font-size:12px;transform:scaleX(1.015);transform-origin:100% 50%">$10,000,171</span>
<span class="t" style="right:534px;top:680.02px;font-size:12px;transform:scaleX(1.015);transform-origin:100% 50%">$10,194,752</span>
<span class="t" style="right:445px;top:680.02px;font-size:12px;transform:scaleX(1.015);transform-origin:100% 50%">$10,393,133</span>
<span class="t" style="right:356px;top:680.02px;font-size:12px;transform:scaleX(1.015);transform-origin:100% 50%">$10,595,388</span>
<span class="t" style="right:266px;top:680.02px;font-size:12px;transform:scaleX(1.015);transform-origin:100% 50%">$26,635,339</span>
<span class="t" style="right:177px;top:680.02px;font-size:12px;transform:scaleX(1.015);transform-origin:100% 50%">$11,011,826</span>
<span class="t" style="right:88px;top:680.02px;font-size:12px;transform:scaleX(1.015);transform-origin:100% 50%">$11,226,166</span>
<span class="t" style="right:-1px;top:680.02px;font-size:12px;transform:scaleX(1.015);transform-origin:100% 50%">$11,444,693</span>
<span class="t" style="left:38.5px;top:698.02px;font-size:12px;transform:scaleX(0.897);transform-origin:0 50%">CAPEX</span>
<span class="t" style="right:1605px;top:698.02px;font-size:12px;transform:scaleX(1.022);transform-origin:100% 50%">$240,000,000</span>
<span class="t" style="left:38.5px;top:715.02px;font-size:12px;font-weight:700;transform:scaleX(0.954);transform-origin:0 50%">Total Costs</span>
<span class="t" style="right:1605.5px;top:715.02px;font-size:12px;font-weight:700;transform:scaleX(1.022);transform-origin:100% 50%">$240,000,000</span>
<span class="t" style="right:1516.5px;top:715.02px;font-size:12px;font-weight:700;transform:scaleX(1.020);transform-origin:100% 50%">$8,247,960</span>
<span class="t" style="right:1427.5px;top:715.02px;font-size:12px;font-weight:700;transform:scaleX(1.020);transform-origin:100% 50%">$8,408,335</span>
<span class="t" style="right:1337.5px;top:715.02px;font-size:12px;font-weight:700;transform:scaleX(1.020);transform-origin:100% 50%">$8,571,841</span>
<span class="t" style="right:1248.5px;top:715.02px;font-size:12px;font-weight:700;transform:scaleX(1.020);transform-origin:100% 50%">$8,738,537</span>
<span class="t" style="right:1159.5px;top:715.02px;font-size:12px;font-weight:700;transform:scaleX(1.020);transform-origin:100% 50%">$8,908,487</span>
<span class="t" style="right:1070.5px;top:715.02px;font-size:12px;font-weight:700;transform:scaleX(1.020);transform-origin:100% 50%">$9,081,755</span>
<span class="t" style="right:980.5px;top:715.02px;font-size:12px;font-weight:700;transform:scaleX(1.020);transform-origin:100% 50%">$9,258,404</span>
<span class="t" style="right:891.5px;top:715.02px;font-size:12px;font-weight:700;transform:scaleX(1.020);transform-origin:100% 50%">$9,438,503</span>
<span class="t" style="right:802.5px;top:715.02px;font-size:12px;font-weight:700;transform:scaleX(1.020);transform-origin:100% 50%">$9,622,117</span>
<span class="t" style="right:713.5px;top:715.02px;font-size:12px;font-weight:700;transform:scaleX(1.020);transform-origin:100% 50%">$9,809,316</span>
<span class="t" style="right:623.5px;top:715.02px;font-size:12px;font-weight:700;transform:scaleX(1.020);transform-origin:100% 50%">$10,000,171</span>
<span class="t" style="right:534.5px;top:715.02px;font-size:12px;font-weight:700;transform:scaleX(1.020);transform-origin:100% 50%">$10,194,752</span>
<span class="t" style="right:445.5px;top:715.02px;font-size:12px;font-weight:700;transform:scaleX(1.020);transform-origin:100% 50%">$10,393,133</span>
<span class="t" style="right:356.5px;top:715.02px;font-size:12px;font-weight:700;transform:scaleX(1.020);transform-origin:100% 50%">$10,595,388</span>
<span class="t" style="right:266.5px;top:715.02px;font-size:12px;font-weight:700;transform:scaleX(1.020);transform-origin:100% 50%">$26,635,339</span>
<span class="t" style="right:177.5px;top:715.02px;font-size:12px;font-weight:700;transform:scaleX(1.020);transform-origin:100% 50%">$11,011,826</span>
<span class="t" style="right:88.5px;top:715.02px;font-size:12px;font-weight:700;transform:scaleX(1.020);transform-origin:100% 50%">$11,226,166</span>
<span class="t" style="right:-0.5px;top:715.02px;font-size:12px;font-weight:700;transform:scaleX(1.020);transform-origin:100% 50%">$11,444,693</span>
<div class="b" style="left:35px;top:675px;width:1865px;height:1px;background:#9a9a9a"></div>
<div class="b" style="left:35px;top:676px;width:1865px;height:1px;background:#111"></div>
<div class="b" style="left:35px;top:693px;width:1865px;height:2px;background:#1c1c1c"></div>
<div class="b" style="left:35px;top:711px;width:1865px;height:2px;background:#1c1c1c"></div>
<div class="b" style="left:35px;top:729px;width:1865px;height:1px;background:#777"></div>
<div class="b" style="left:35px;top:730px;width:1865px;height:2px;background:#000"></div>
<span class="t" style="left:38.5px;top:754.02px;font-size:12px">Present Value Factor</span>
<span class="t" style="right:1601.5px;top:754.02px;font-size:12px;transform:scaleX(1.020);transform-origin:100% 50%">1.00</span>
<span class="t" style="right:1512px;top:754.02px;font-size:12px;transform:scaleX(1.020);transform-origin:100% 50%">0.93</span>
<span class="t" style="right:1423px;top:754.02px;font-size:12px;transform:scaleX(1.020);transform-origin:100% 50%">0.86</span>
<span class="t" style="right:1333px;top:754.02px;font-size:12px;transform:scaleX(1.020);transform-origin:100% 50%">0.79</span>
<span class="t" style="right:1244px;top:754.02px;font-size:12px;transform:scaleX(1.020);transform-origin:100% 50%">0.74</span>
<span class="t" style="right:1155px;top:754.02px;font-size:12px;transform:scaleX(1.020);transform-origin:100% 50%">0.68</span>
<span class="t" style="right:1066px;top:754.02px;font-size:12px;transform:scaleX(1.020);transform-origin:100% 50%">0.63</span>
<span class="t" style="right:976px;top:754.02px;font-size:12px;transform:scaleX(1.020);transform-origin:100% 50%">0.58</span>
<span class="t" style="right:887px;top:754.02px;font-size:12px;transform:scaleX(1.020);transform-origin:100% 50%">0.54</span>
<span class="t" style="right:798px;top:754.02px;font-size:12px;transform:scaleX(1.020);transform-origin:100% 50%">0.50</span>
<span class="t" style="right:709px;top:754.02px;font-size:12px;transform:scaleX(1.020);transform-origin:100% 50%">0.46</span>
<span class="t" style="right:619px;top:754.02px;font-size:12px;transform:scaleX(1.020);transform-origin:100% 50%">0.43</span>
<span class="t" style="right:530px;top:754.02px;font-size:12px;transform:scaleX(1.020);transform-origin:100% 50%">0.40</span>
<span class="t" style="right:441px;top:754.02px;font-size:12px;transform:scaleX(1.020);transform-origin:100% 50%">0.37</span>
<span class="t" style="right:352px;top:754.02px;font-size:12px;transform:scaleX(1.020);transform-origin:100% 50%">0.34</span>
<span class="t" style="right:262px;top:754.02px;font-size:12px;transform:scaleX(1.020);transform-origin:100% 50%">0.32</span>
<span class="t" style="right:173px;top:754.02px;font-size:12px;transform:scaleX(1.020);transform-origin:100% 50%">0.29</span>
<span class="t" style="right:84px;top:754.02px;font-size:12px;transform:scaleX(1.020);transform-origin:100% 50%">0.27</span>
<span class="t" style="right:-5px;top:754.02px;font-size:12px;transform:scaleX(1.020);transform-origin:100% 50%">0.25</span>
<span class="t" style="left:38.5px;top:790.02px;font-size:12px;transform:scaleX(0.989);transform-origin:0 50%">Present Value of Costs</span>
<span class="t" style="right:1605px;top:790.02px;font-size:12px;transform:scaleX(1.022);transform-origin:100% 50%">$240,000,000</span>
<span class="t" style="right:1516px;top:790.02px;font-size:12px;transform:scaleX(1.015);transform-origin:100% 50%">$7,637,000</span>
<span class="t" style="right:1427px;top:790.02px;font-size:12px;transform:scaleX(1.015);transform-origin:100% 50%">$7,208,792</span>
<span class="t" style="right:1337px;top:790.02px;font-size:12px;transform:scaleX(1.015);transform-origin:100% 50%">$6,804,604</span>
<span class="t" style="right:1248px;top:790.02px;font-size:12px;transform:scaleX(1.015);transform-origin:100% 50%">$6,423,086</span>
<span class="t" style="right:1159px;top:790.02px;font-size:12px;transform:scaleX(1.015);transform-origin:100% 50%">$6,062,967</span>
<span class="t" style="right:1070px;top:790.02px;font-size:12px;transform:scaleX(1.015);transform-origin:100% 50%">$5,723,046</span>
<span class="t" style="right:980px;top:790.02px;font-size:12px;transform:scaleX(1.015);transform-origin:100% 50%">$5,402,190</span>
<span class="t" style="right:891px;top:790.02px;font-size:12px;transform:scaleX(1.015);transform-origin:100% 50%">$5,099,329</span>
<span class="t" style="right:802px;top:790.02px;font-size:12px;transform:scaleX(1.015);transform-origin:100% 50%">$4,813,454</span>
<span class="t" style="right:713px;top:790.02px;font-size:12px;transform:scaleX(1.015);transform-origin:100% 50%">$4,543,611</span>
<span class="t" style="right:623px;top:790.02px;font-size:12px;transform:scaleX(1.015);transform-origin:100% 50%">$4,288,902</span>
<span class="t" style="right:534px;top:790.02px;font-size:12px;transform:scaleX(1.015);transform-origin:100% 50%">$4,048,476</span>
<span class="t" style="right:445px;top:790.02px;font-size:12px;transform:scaleX(1.015);transform-origin:100% 50%">$3,821,533</span>
<span class="t" style="right:356px;top:790.02px;font-size:12px;transform:scaleX(1.015);transform-origin:100% 50%">$3,607,317</span>
<span class="t" style="right:266px;top:790.02px;font-size:12px;transform:scaleX(1.015);transform-origin:100% 50%">$8,396,570</span>
<span class="t" style="right:177px;top:790.02px;font-size:12px;transform:scaleX(1.015);transform-origin:100% 50%">$3,214,247</span>
<span class="t" style="right:88px;top:790.02px;font-size:12px;transform:scaleX(1.015);transform-origin:100% 50%">$3,034,084</span>
<span class="t" style="right:-1px;top:790.02px;font-size:12px;transform:scaleX(1.015);transform-origin:100% 50%">$2,864,013</span>
<span class="t" style="left:38.5px;top:826.02px;font-size:12px;font-weight:700;transform:scaleX(0.939);transform-origin:0 50%">Sum of Present Value of Costs</span>
<span class="t" style="right:1606px;top:826.02px;font-size:12px;font-weight:700;transform:scaleX(1.022);transform-origin:100% 50%">$349,486,635</span>
<span class="t" style="left:38.5px;top:863.02px;font-size:12px;transform:scaleX(0.979);transform-origin:0 50%">Present Value of Energy</span>
<span class="t" style="right:1516px;top:863.02px;font-size:12px;transform:scaleX(1.015);transform-origin:100% 50%">462,333</span>
<span class="t" style="right:1427px;top:863.02px;font-size:12px;transform:scaleX(1.015);transform-origin:100% 50%">426,802</span>
<span class="t" style="right:1337px;top:863.02px;font-size:12px;transform:scaleX(1.015);transform-origin:100% 50%">394,002</span>
<span class="t" style="right:1248px;top:863.02px;font-size:12px;transform:scaleX(1.015);transform-origin:100% 50%">363,722</span>
<span class="t" style="right:1159px;top:863.02px;font-size:12px;transform:scaleX(1.015);transform-origin:100% 50%">335,769</span>
<span class="t" style="right:1070px;top:863.02px;font-size:12px;transform:scaleX(1.015);transform-origin:100% 50%">309,965</span>
<span class="t" style="right:980px;top:863.02px;font-size:12px;transform:scaleX(1.015);transform-origin:100% 50%">286,143</span>
<span class="t" style="right:891px;top:863.02px;font-size:12px;transform:scaleX(1.015);transform-origin:100% 50%">264,153</span>
<span class="t" style="right:802px;top:863.02px;font-size:12px;transform:scaleX(1.015);transform-origin:100% 50%">243,852</span>
<span class="t" style="right:713px;top:863.02px;font-size:12px;transform:scaleX(1.015);transform-origin:100% 50%">225,112</span>
<span class="t" style="right:623px;top:863.02px;font-size:12px;transform:scaleX(1.015);transform-origin:100% 50%">207,811</span>
<span class="t" style="right:534px;top:863.02px;font-size:12px;transform:scaleX(1.015);transform-origin:100% 50%">191,841</span>
<span class="t" style="right:445px;top:863.02px;font-size:12px;transform:scaleX(1.015);transform-origin:100% 50%">177,097</span>
<span class="t" style="right:356px;top:863.02px;font-size:12px;transform:scaleX(1.015);transform-origin:100% 50%">163,487</span>
<span class="t" style="right:266px;top:863.02px;font-size:12px;transform:scaleX(1.015);transform-origin:100% 50%">150,923</span>
<span class="t" style="right:177px;top:863.02px;font-size:12px;transform:scaleX(1.015);transform-origin:100% 50%">139,324</span>
<span class="t" style="right:88px;top:863.02px;font-size:12px;transform:scaleX(1.015);transform-origin:100% 50%">128,617</span>
<span class="t" style="right:-1px;top:863.02px;font-size:12px;transform:scaleX(1.015);transform-origin:100% 50%">118,733</span>
<span class="t" style="left:38.5px;top:899.02px;font-size:12px;font-weight:700;transform:scaleX(0.929);transform-origin:0 50%">Sum of Present Value of Energy</span>
<span class="t" style="right:1606px;top:899.02px;font-size:12px;font-weight:700;transform:scaleX(1.030);transform-origin:100% 50%">5,201,038</span>
<span class="t" style="left:38.5px;top:935.02px;font-size:12px;font-weight:700;transform:scaleX(0.946);transform-origin:0 50%">Final Cost per MWh</span>
<span class="t" style="right:1606px;top:935.02px;font-size:12px;font-weight:700;transform:scaleX(1.022);transform-origin:100% 50%">$67.20</span>
<span class="t" style="left:38.5px;top:955.02px;font-size:12px;transform:scaleX(0.964);transform-origin:0 50%">per KWh</span>
<span class="t" style="right:1605px;top:955.02px;font-size:12px;transform:scaleX(1.022);transform-origin:100% 50%">$0.067</span>
<div class="b" style="left:35px;top:767px;width:1865px;height:1px;background:repeating-linear-gradient(90deg,#000 0 2px,transparent 2px 3px)"></div>
<div class="b" style="left:35px;top:803px;width:1865px;height:1px;background:repeating-linear-gradient(90deg,#000 0 2px,transparent 2px 3px)"></div>
<div class="b" style="left:35px;top:876px;width:1865px;height:1px;background:repeating-linear-gradient(90deg,#000 0 2px,transparent 2px 3px)"></div>
<div class="b" style="left:35px;top:839px;width:287px;height:2px;background:#000"></div>
<div class="b" style="left:35px;top:912px;width:287px;height:2px;background:#000"></div>
<div class="b" style="left:34px;top:930px;width:288px;height:21px;border:2px solid #000"></div>
</div></div>
<div class="b" style="left:1900px;top:203px;width:20px;height:782px;background:#dddddd"></div>
<svg class="b" style="left:1906px;top:208px" width="10" height="8" viewBox="0 0 10 8"><path d="M5 1 L9.2 6.6 L0.8 6.6 Z" fill="#2b2b2b" stroke="#2b2b2b" stroke-width="0.8" stroke-linejoin="round"/></svg>
<div class="b" style="left:1906px;top:219px;width:9px;height:189px;background:#2e2e2e;border-radius:4.5px"></div>
<svg class="b" style="left:1906px;top:975px" width="10" height="8" viewBox="0 0 10 8"><path d="M5 7 L9.2 1.4 L0.8 1.4 Z" fill="#2b2b2b" stroke="#2b2b2b" stroke-width="0.8" stroke-linejoin="round"/></svg>
<svg class="b" style="left:14px;top:14px" width="17" height="17" viewBox="0 0 17 17"><rect x="3.5" y="0.8" width="12.6" height="15" rx="1.6" fill="#15542b"/><rect x="3.5" y="0.8" width="12.6" height="4.2" rx="1.4" fill="#2f9149"/><rect x="3.5" y="9" width="12.6" height="6.8" rx="1.4" fill="#0a3317"/><rect x="0.6" y="4.2" width="9.4" height="9.4" rx="1.3" fill="#072a12"/><path d="M3.4 6.6 L7.2 11.2 M7.2 6.6 L3.4 11.2" stroke="#fff" stroke-width="1.25"/></svg>
<span class="t" style="left:46px;top:18.02px;font-size:9.6px;color:#8c8c8c;transform:scaleX(0.961);transform-origin:0 50%;-webkit-text-stroke:0.1px currentColor">AutoSave</span>
<div class="b" style="left:93px;top:13px;width:41px;height:19px;background:#fff;border:1px solid #8a8a8a;border-radius:9.5px"></div>
<div class="b" style="left:96px;top:15.7px;width:13.2px;height:13.2px;background:#828282;border-radius:50%"></div>
<span class="t" style="left:115px;top:18.02px;font-size:9.6px;color:#8c8c8c;transform:scaleX(1.069);transform-origin:0 50%;-webkit-text-stroke:0.1px currentColor">Off</span>
<svg class="b" style="left:146px;top:14px" width="16" height="17" viewBox="0 0 16 17"><path d="M1.2 1.2 H12.2 L14.8 3.8 V15.3 H1.2 Z" fill="none" stroke="#8f8f8f" stroke-width="1.2" stroke-linejoin="round"/><path d="M4.2 1.4 V5.6 H11 V1.4 M4 15 V9.4 H12 V15" fill="none" stroke="#8f8f8f" stroke-width="1.2"/></svg>
<svg class="b" style="left:171px;top:13px" width="17" height="18" viewBox="0 0 17 18"><path d="M2.2 2.4 V8 H7.8 M2.6 7.6 C4.2 4.2 8 2.4 11.2 4 C14.6 5.8 14.8 10 12.2 12.6 L8 16.4" fill="none" stroke="#8f8f8f" stroke-width="1.25" stroke-linecap="round" stroke-linejoin="round"/></svg>
<svg class="b" style="left:192.5px;top:20.2px" width="7" height="4.6" viewBox="0 0 7 4.6"><path d="M1 1 L3.5 3.6 L6 1" fill="none" stroke="#8f8f8f" stroke-width="1.1" stroke-linecap="round" stroke-linejoin="round"/></svg>
<svg class="b" style="left:207px;top:13px" width="17" height="18" viewBox="0 0 17 18"><path d="M14.8 2.4 V8 H9.2 M14.4 7.6 C12.8 4.2 9 2.4 5.8 4 C2.4 5.8 2.2 10 4.8 12.6 L9 16.4" fill="none" stroke="#8f8f8f" stroke-width="1.25" stroke-linecap="round" stroke-linejoin="round"/></svg>
<svg class="b" style="left:228.5px;top:20.2px" width="7" height="4.6" viewBox="0 0 7 4.6"><path d="M1 1 L3.5 3.6 L6 1" fill="none" stroke="#8f8f8f" stroke-width="1.1" stroke-linecap="round" stroke-linejoin="round"/></svg>
<div class="b" style="left:247.5px;top:20px;width:8px;height:1.2px;background:#8f8f8f"></div>
<svg class="b" style="left:248px;top:22.2px" width="7" height="4.6" viewBox="0 0 7 4.6"><path d="M1 1 L3.5 3.6 L6 1" fill="none" stroke="#8f8f8f" stroke-width="1.1" stroke-linecap="round" stroke-linejoin="round"/></svg>
<span class="t" style="left:278.5px;top:17.82px;font-size:11.2px;color:#8c8c8c;transform:scaleX(0.970);transform-origin:0 50%;-webkit-text-stroke:0.1px currentColor">Renewable Energy Quick Calculators</span>
<span class="t" style="left:463px;top:18.62px;font-size:11.5px;color:#8c8c8c">•</span>
<span class="t" style="left:472.5px;top:17.82px;font-size:11.2px;color:#8c8c8c;transform:scaleX(0.953);transform-origin:0 50%;-webkit-text-stroke:0.1px currentColor">Saved to this PC</span>
<svg class="b" style="left:555.5px;top:20px" width="10" height="6" viewBox="0 0 10 6"><path d="M1 1 L5 5 L9 1" fill="none" stroke="#8f8f8f" stroke-width="1.1" stroke-linecap="round" stroke-linejoin="round"/></svg>
<div class="b" style="left:795px;top:7px;width:346px;height:31px;background:#dedede;border:1px solid #b4b4b4;border-bottom-color:#9c9c9c;border-radius:4px"></div>
<svg class="b" style="left:808px;top:14px" width="16" height="16" viewBox="0 0 16 16"><circle cx="9.6" cy="6.2" r="4.4" fill="none" stroke="#8f8f8f" stroke-width="1.2"/><path d="M6.4 9.4 L1.2 14.6" stroke="#8f8f8f" stroke-width="1.2" stroke-linecap="round"/></svg>
<span class="t" style="left:834px;top:16.22px;font-size:12px;color:#8c8c8c;-webkit-text-stroke:0.1px currentColor">Search</span>
<div class="b" style="left:1751px;top:11px;width:23px;height:23px;background:#123d0c;border-radius:50%"></div>
<span class="t" style="left:1757.54px;top:19.02px;font-size:8.5px;color:#5f7f5b">JV</span>
<div class="b" style="left:1803px;top:21.5px;width:9px;height:1.2px;background:#a6a6a6"></div>
<svg class="b" style="left:1846px;top:16px" width="13" height="13" viewBox="0 0 13 13"><rect x="1" y="3.4" width="8" height="8" rx="1.6" fill="none" stroke="#a6a6a6" stroke-width="1.1"/><path d="M3.6 1.2 H9.4 Q11.6 1.2 11.6 3.4 V9.2" fill="none" stroke="#a6a6a6" stroke-width="1.1"/></svg>
<svg class="b" style="left:1892px;top:16px" width="12" height="12" viewBox="0 0 12 12"><path d="M1.4 1.4 L10.4 10.4 M10.4 1.4 L1.4 10.4" stroke="#a6a6a6" stroke-width="1.15"/></svg>
<span class="t" style="left:20px;top:54.22px;font-size:13px;color:#1a1a1a;transform:scaleX(0.859);transform-origin:0 50%">File</span>
<span class="t" style="left:116px;top:54.22px;font-size:13px;color:#1a1a1a;transform:scaleX(0.984);transform-origin:0 50%">Insert</span>
<span class="t" style="left:167px;top:54.22px;font-size:13px;color:#1a1a1a;transform:scaleX(0.952);transform-origin:0 50%">Page Layout</span>
<span class="t" style="left:256.5px;top:54.22px;font-size:13px;color:#1a1a1a;transform:scaleX(0.951);transform-origin:0 50%">Formulas</span>
<span class="t" style="left:326.5px;top:54.22px;font-size:13px;color:#1a1a1a;transform:scaleX(0.947);transform-origin:0 50%">Data</span>
<span class="t" style="left:373px;top:54.22px;font-size:13px;color:#1a1a1a;transform:scaleX(0.903);transform-origin:0 50%">Review</span>
<span class="t" style="left:431px;top:54.22px;font-size:13px;color:#1a1a1a;transform:scaleX(0.966);transform-origin:0 50%">View</span>
<span class="t" style="left:476.5px;top:54.22px;font-size:13px;color:#1a1a1a;transform:scaleX(1.015);transform-origin:0 50%">Automate</span>
<span class="t" style="left:552px;top:54.22px;font-size:13px;color:#1a1a1a;transform:scaleX(0.970);transform-origin:0 50%">Developer</span>
<span class="t" style="left:628.5px;top:54.22px;font-size:13px;color:#1a1a1a;transform:scaleX(0.954);transform-origin:0 50%">Help</span>
<span class="t" style="left:673px;top:54.22px;font-size:13px;color:#1a1a1a;transform:scaleX(0.993);transform-origin:0 50%">Acrobat</span>
<span class="t" style="left:63px;top:54.22px;font-size:13px;transform:scaleX(1.009);transform-origin:0 50%;-webkit-text-stroke:0.45px #000">Home</span>
<div class="b" style="left:63px;top:70px;width:36.6px;height:2.8px;background:#0c3d1c;border-radius:1.4px"></div>
<div class="b" style="left:1714px;top:48.5px;width:88.5px;height:23px;background:#fff;border:1px solid #8e8e8e;border-radius:4px"></div>
<svg class="b" style="left:1719px;top:53px" width="14" height="13" viewBox="0 0 14 13"><path d="M1.4 1.2 H11.6 V8.2 H6 L3.2 10.8 V8.2 H1.4 Z" fill="none" stroke="#222" stroke-width="1.15" stroke-linejoin="round"/></svg>
<span class="t" style="left:1733.8px;top:53.22px;font-size:13px;color:#111;transform:scaleX(0.986);transform-origin:0 50%">Comments</span>
<div class="b" style="left:1810px;top:48.5px;width:67.5px;height:23px;background:#0b3a16;border-radius:4px"></div>
<svg class="b" style="left:1814px;top:52px" width="15" height="14" viewBox="0 0 15 14"><path d="M5.2 4.4 H2 V12.4 H11.6 V9.6" fill="none" stroke="#e9efe9" stroke-width="1.05" stroke-linejoin="round"/><path d="M4.6 9.8 C5 6.6 7 5.2 9.4 5.2 V3 L13.4 6.4 L9.4 9.6 V7.4 C7.4 7.4 5.8 8 4.6 9.8 Z" fill="none" stroke="#e9efe9" stroke-width="1.05" stroke-linejoin="round"/></svg>
<span class="t" style="left:1829.8px;top:53.22px;font-size:13px;color:#fff;transform:scaleX(0.894);transform-origin:0 50%">Share</span>
<svg class="b" style="left:1866.3px;top:58.1px" width="7.4" height="4.8" viewBox="0 0 7.4 4.8"><path d="M1 1 L3.7 3.8 L6.4 1" fill="none" stroke="#e9efe9" stroke-width="1.1" stroke-linecap="round" stroke-linejoin="round"/></svg>
<svg class="b" style="left:1890px;top:51px" width="18" height="18" viewBox="0 0 18 18"><circle cx="6.6" cy="7.6" r="2.9" fill="none" stroke="#222" stroke-width="1.15"/><path d="M1.4 16.4 C1.6 12.6 3.6 11.4 6.6 11.4 C9.6 11.4 11.6 12.6 11.8 16.4" fill="none" stroke="#222" stroke-width="1.15"/><path d="M7 3.6 V1.4 H16.4 V8.4 H12.4 L11.2 9.8" fill="none" stroke="#222" stroke-width="1.1" stroke-linejoin="round"/></svg>
<div class="b" style="left:7px;top:175px;width:286.5px;height:22.4px;background:#fff;border-radius:4px;border:1px solid #d3d3d3;border-bottom-color:#bcbcbc"></div>
<span class="t" style="left:12.8px;top:180.42px;font-size:13px;color:#1c1c1c;transform:scaleX(0.885);transform-origin:0 50%">I2</span>
<svg class="b" style="left:279px;top:183.4px" width="10" height="6" viewBox="0 0 10 6"><path d="M1 1 L5 5 L9 1" fill="none" stroke="#222" stroke-width="1.25" stroke-linecap="round" stroke-linejoin="round"/></svg>
<div class="b" style="left:302.2px;top:182.2px;width:2.6px;height:2.6px;background:#262626;border-radius:0.6px"></div>
<div class="b" style="left:302.2px;top:186px;width:2.6px;height:2.6px;background:#262626;border-radius:0.6px"></div>
<div class="b" style="left:302.2px;top:189.8px;width:2.6px;height:2.6px;background:#262626;border-radius:0.6px"></div>
<div class="b" style="left:313.5px;top:175px;width:78.5px;height:22.4px;background:#fff;border-radius:4px;border:1px solid #d3d3d3;border-bottom-color:#bcbcbc"></div>
<svg class="b" style="left:318px;top:180px" width="14" height="14" viewBox="0 0 14 14"><path d="M1.6 1.6 L11.6 11.6 M11.6 1.6 L1.6 11.6" stroke="#9a9a9a" stroke-width="1.15"/></svg>
<svg class="b" style="left:338px;top:180px" width="18" height="14" viewBox="0 0 18 14"><path d="M1.6 7.6 L6 11.8 L15.6 1.8" fill="none" stroke="#9a9a9a" stroke-width="1.15"/></svg>
<span class="t" style="left:363px;top:178.5px;font-family:'Liberation Serif',serif;font-style:italic;font-weight:700;font-size:14.5px;color:#262626;letter-spacing:-0.3px;-webkit-text-stroke:0">fx</span>
<svg class="b" style="left:381px;top:183.6px" width="9" height="5.6" viewBox="0 0 9 5.6"><path d="M1 1 L4.5 4.6 L8 1" fill="none" stroke="#444" stroke-width="1.1" stroke-linecap="round" stroke-linejoin="round"/></svg>
<div class="b" style="left:397.5px;top:175px;width:1515px;height:22.4px;background:#fff;border-radius:4px;border:1px solid #d3d3d3;border-bottom-color:#bcbcbc"></div>
<svg class="b" style="left:1897.5px;top:183.4px" width="10" height="6" viewBox="0 0 10 6"><path d="M1 1 L5 5 L9 1" fill="none" stroke="#222" stroke-width="1.25" stroke-linecap="round" stroke-linejoin="round"/></svg>
<div class="b" style="left:7px;top:75px;width:1906px;height:93px;background:#fff;border-radius:7px;box-shadow:0 2px 2px rgba(0,0,0,0.2), -1px 0 0 rgba(0,0,0,0.08), 1px 0 0 rgba(0,0,0,0.08)"></div>
<div class="b" style="left:169.5px;top:80px;width:1px;height:83px;background:#d2d2d2"></div>
<div class="b" style="left:388px;top:80px;width:1px;height:83px;background:#d2d2d2"></div>
<div class="b" style="left:669px;top:80px;width:1px;height:83px;background:#d2d2d2"></div>
<div class="b" style="left:819px;top:80px;width:1px;height:83px;background:#d2d2d2"></div>
<div class="b" style="left:1287.5px;top:80px;width:1px;height:83px;background:#d2d2d2"></div>
<div class="b" style="left:1423.5px;top:80px;width:1px;height:83px;background:#d2d2d2"></div>
<div class="b" style="left:1626px;top:80px;width:1px;height:83px;background:#d2d2d2"></div>
<div class="b" style="left:1684.5px;top:80px;width:1px;height:83px;background:#d2d2d2"></div>
<div class="b" style="left:1740.5px;top:80px;width:1px;height:83px;background:#d2d2d2"></div>
<div class="b" style="left:1814px;top:80px;width:1px;height:83px;background:#d2d2d2"></div>
<div class="b" style="left:1868px;top:80px;width:1px;height:83px;background:#d2d2d2"></div>
<span class="t" style="left:61px;top:154.02px;font-size:10.3px;color:#1c1c1c;transform:scaleX(0.987);transform-origin:0 50%">Clipboard</span>
<svg class="b" style="left:158.5px;top:155px" width="9" height="9" viewBox="0 0 9 9"><path d="M1 4 V1 H4" fill="none" stroke="#444" stroke-width="1"/><path d="M3.4 3.4 L7.6 7.6 M7.8 4.4 V7.8 H4.4" fill="none" stroke="#444" stroke-width="1.1"/></svg>
<span class="t" style="left:262px;top:154.02px;font-size:10.3px;color:#1c1c1c;transform:scaleX(0.922);transform-origin:0 50%">Font</span>
<svg class="b" style="left:377.5px;top:155px" width="9" height="9" viewBox="0 0 9 9"><path d="M1 4 V1 H4" fill="none" stroke="#444" stroke-width="1"/><path d="M3.4 3.4 L7.6 7.6 M7.8 4.4 V7.8 H4.4" fill="none" stroke="#444" stroke-width="1.1"/></svg>
<span class="t" style="left:499.5px;top:154.02px;font-size:10.3px;color:#1c1c1c;transform:scaleX(0.950);transform-origin:0 50%">Alignment</span>
<svg class="b" style="left:657.5px;top:155px" width="9" height="9" viewBox="0 0 9 9"><path d="M1 4 V1 H4" fill="none" stroke="#444" stroke-width="1"/><path d="M3.4 3.4 L7.6 7.6 M7.8 4.4 V7.8 H4.4" fill="none" stroke="#444" stroke-width="1.1"/></svg>
<span class="t" style="left:718.5px;top:154.02px;font-size:10.3px;color:#1c1c1c;transform:scaleX(0.969);transform-origin:0 50%">Number</span>
<svg class="b" style="left:807.5px;top:155px" width="9" height="9" viewBox="0 0 9 9"><path d="M1 4 V1 H4" fill="none" stroke="#444" stroke-width="1"/><path d="M3.4 3.4 L7.6 7.6 M7.8 4.4 V7.8 H4.4" fill="none" stroke="#444" stroke-width="1.1"/></svg>
<span class="t" style="left:1041px;top:154.62px;font-size:10.3px;color:#1c1c1c;transform:scaleX(0.874);transform-origin:0 50%">Styles</span>
<span class="t" style="left:1345.5px;top:154.62px;font-size:10.3px;color:#1c1c1c;transform:scaleX(0.874);transform-origin:0 50%">Cells</span>
<span class="t" style="left:1510px;top:154.62px;font-size:10.3px;color:#1c1c1c;transform:scaleX(0.953);transform-origin:0 50%">Editing</span>
<span class="t" style="left:1638px;top:155.02px;font-size:10.3px;color:#1c1c1c;transform:scaleX(0.959);transform-origin:0 50%">Add-ins</span>
<span class="t" style="left:1744px;top:155.02px;font-size:10.3px;color:#1c1c1c;transform:scaleX(0.984);transform-origin:0 50%">Adobe Acrobat</span>
<span class="t" style="left:1827.5px;top:155.02px;font-size:10.3px;color:#1c1c1c;transform:scaleX(0.925);transform-origin:0 50%">Solver</span>
<span class="t" style="left:25.5px;top:116.02px;font-size:12px;color:#8c8c8c;transform:scaleX(0.815);transform-origin:0 50%">Paste</span>
<svg class="b" style="left:34.5px;top:134px" width="7" height="4.6" viewBox="0 0 7 4.6"><path d="M1 1 L3.5 3.6 L6 1" fill="none" stroke="#8c8c8c" stroke-width="1.1" stroke-linecap="round" stroke-linejoin="round"/></svg>
<span class="t" style="left:81.7px;top:84.22px;font-size:12px;color:#1f1f1f;transform:scaleX(0.884);transform-origin:0 50%">Cut</span>
<span class="t" style="left:81.7px;top:108.42px;font-size:12px;color:#1f1f1f;transform:scaleX(0.910);transform-origin:0 50%">Copy</span>
<svg class="b" style="left:123.2px;top:111.5px" width="7" height="4.6" viewBox="0 0 7 4.6"><path d="M1 1 L3.5 3.6 L6 1" fill="none" stroke="#1f1f1f" stroke-width="1.2" stroke-linecap="round" stroke-linejoin="round"/></svg>
<span class="t" style="left:81.7px;top:132.02px;font-size:12px;color:#1f1f1f;transform:scaleX(0.907);transform-origin:0 50%">Format Painter</span>
<div class="b" style="left:178px;top:85.5px;width:106.5px;height:22px;background:#fff;border:1px solid #8a8a8a;border-radius:3.5px"></div>
<span class="t" style="left:180.5px;top:91.42px;font-size:12.5px;color:#1f1f1f;transform:scaleX(0.905);transform-origin:0 50%">Aptos Narrow</span>
<svg class="b" style="left:275.3px;top:94.5px" width="7" height="4.6" viewBox="0 0 7 4.6"><path d="M1 1 L3.5 3.6 L6 1" fill="none" stroke="#1f1f1f" stroke-width="1.2" stroke-linecap="round" stroke-linejoin="round"/></svg>
<div class="b" style="left:287px;top:85.5px;width:46.5px;height:22px;background:#fff;border:1px solid #8a8a8a;border-radius:3.5px"></div>
<span class="t" style="left:289.6px;top:91.42px;font-size:12.5px;color:#1f1f1f;transform:scaleX(0.809);transform-origin:0 50%">11</span>
<svg class="b" style="left:324px;top:94.5px" width="7" height="4.6" viewBox="0 0 7 4.6"><path d="M1 1 L3.5 3.6 L6 1" fill="none" stroke="#1f1f1f" stroke-width="1.2" stroke-linecap="round" stroke-linejoin="round"/></svg>
<span class="t" style="left:340px;top:88.42px;font-size:15.5px;color:#1f1f1f;transform:scaleX(1.016);transform-origin:0 50%">A</span>
<svg class="b" style="left:350px;top:88.5px" width="6" height="4" viewBox="0 0 6 4"><path d="M0.8 3.2 L3 1 L5.2 3.2" fill="none" stroke="#1a5fd0" stroke-width="1.1"/></svg>
<span class="t" style="left:365.6px;top:91.42px;font-size:12.5px;color:#1f1f1f;transform:scaleX(1.019);transform-origin:0 50%">A</span>
<svg class="b" style="left:373px;top:88.8px" width="6" height="4" viewBox="0 0 6 4"><path d="M0.8 0.8 L3 3 L5.2 0.8" fill="none" stroke="#1a5fd0" stroke-width="1.1"/></svg>
<span class="t" style="left:185.2px;top:119.62px;font-size:13.5px;font-weight:700;color:#1f1f1f;transform:scaleX(0.821);transform-origin:0 50%">B</span>
<span class="t" style="left:210.6px;top:119.62px;font-size:13.5px;font-style:italic;color:#1f1f1f;font-family:'Liberation Serif',serif">I</span>
<span class="t" style="left:232.3px;top:119.62px;font-size:12.5px;color:#1f1f1f;transform:scaleX(0.908);transform-origin:0 50%">U</span>
<div class="b" style="left:232px;top:131.6px;width:9px;height:1.1px;background:#1f1f1f"></div>
<svg class="b" style="left:250.7px;top:124.5px" width="7" height="4.6" viewBox="0 0 7 4.6"><path d="M1 1 L3.5 3.6 L6 1" fill="none" stroke="#1f1f1f" stroke-width="1.2" stroke-linecap="round" stroke-linejoin="round"/></svg>
<div class="b" style="left:264px;top:116px;width:1px;height:22px;background:#d2d2d2"></div>
<div class="b" style="left:304.4px;top:116px;width:1px;height:22px;background:#d2d2d2"></div>
<svg class="b" style="left:291.3px;top:124.5px" width="7" height="4.6" viewBox="0 0 7 4.6"><path d="M1 1 L3.5 3.6 L6 1" fill="none" stroke="#1f1f1f" stroke-width="1.2" stroke-linecap="round" stroke-linejoin="round"/></svg>
<svg class="b" style="left:331.9px;top:124.5px" width="7" height="4.6" viewBox="0 0 7 4.6"><path d="M1 1 L3.5 3.6 L6 1" fill="none" stroke="#1f1f1f" stroke-width="1.2" stroke-linecap="round" stroke-linejoin="round"/></svg>
<svg class="b" style="left:370.5px;top:124.5px" width="7" height="4.6" viewBox="0 0 7 4.6"><path d="M1 1 L3.5 3.6 L6 1" fill="none" stroke="#1f1f1f" stroke-width="1.2" stroke-linecap="round" stroke-linejoin="round"/></svg>
<span class="t" style="left:351px;top:117.82px;font-size:13.5px;color:#1f1f1f;transform:scaleX(1.166);transform-origin:0 50%">A</span>
<div class="b" style="left:348.3px;top:130.4px;width:15.7px;height:3.8px;background:#1a1ad6"></div>
<div class="b" style="left:444.5px;top:85.5px;width:22.5px;height:22.5px;background:#d9d9d9;border:1px solid #7c7c7c;border-radius:4px"></div>
<div class="b" style="left:469px;top:86px;width:1px;height:22px;background:#d2d2d2"></div>
<div class="b" style="left:469px;top:116px;width:1px;height:22px;background:#d2d2d2"></div>
<div class="b" style="left:522.5px;top:86px;width:1px;height:56px;background:#d2d2d2"></div>
<svg class="b" style="left:494.7px;top:94.9px" width="7" height="4.6" viewBox="0 0 7 4.6"><path d="M1 1 L3.5 3.6 L6 1" fill="none" stroke="#1f1f1f" stroke-width="1.2" stroke-linecap="round" stroke-linejoin="round"/></svg>
<span class="t" style="left:551.5px;top:91.62px;font-size:12px;color:#1f1f1f;transform:scaleX(0.933);transform-origin:0 50%">Wrap Text</span>
<span class="t" style="left:551.5px;top:121.62px;font-size:12px;color:#1f1f1f;transform:scaleX(0.933);transform-origin:0 50%">Merge &amp; Center</span>
<svg class="b" style="left:647px;top:124.9px" width="7" height="4.6" viewBox="0 0 7 4.6"><path d="M1 1 L3.5 3.6 L6 1" fill="none" stroke="#1f1f1f" stroke-width="1.2" stroke-linecap="round" stroke-linejoin="round"/></svg>
<div class="b" style="left:677px;top:85.5px;width:135px;height:22px;background:#fff;border:1px solid #8a8a8a;border-radius:3.5px"></div>
<span class="t" style="left:680px;top:91.62px;font-size:12.5px;color:#1f1f1f;transform:scaleX(0.843);transform-origin:0 50%">General</span>
<svg class="b" style="left:802.5px;top:94.7px" width="7" height="4.6" viewBox="0 0 7 4.6"><path d="M1 1 L3.5 3.6 L6 1" fill="none" stroke="#1f1f1f" stroke-width="1.2" stroke-linecap="round" stroke-linejoin="round"/></svg>
<span class="t" style="left:684.2px;top:118.42px;font-size:17px;color:#1f1f1f;transform:scaleX(0.846);transform-origin:0 50%">$</span>
<svg class="b" style="left:702.3px;top:124.9px" width="7" height="4.6" viewBox="0 0 7 4.6"><path d="M1 1 L3.5 3.6 L6 1" fill="none" stroke="#1f1f1f" stroke-width="1.2" stroke-linecap="round" stroke-linejoin="round"/></svg>
<span class="t" style="left:719.5px;top:118.42px;font-size:17px;color:#1f1f1f;transform:scaleX(0.959);transform-origin:0 50%">%</span>
<svg class="b" style="left:746px;top:119px" width="10" height="15" viewBox="0 0 10 15"><circle cx="4.8" cy="4.6" r="2.7" fill="#1f1f1f"/><path d="M7.4 4.2 C7.8 8.6 6 11.6 2.4 13.2" fill="none" stroke="#1f1f1f" stroke-width="1.6" stroke-linecap="round"/></svg>
<div class="b" style="left:763.5px;top:116px;width:1px;height:22px;background:#d2d2d2"></div>
<span class="t" style="left:833px;top:114.62px;font-size:12px;color:#1f1f1f;transform:scaleX(0.966);transform-origin:0 50%">Conditional</span>
<span class="t" style="left:829.5px;top:129.62px;font-size:12px;color:#1f1f1f;transform:scaleX(0.947);transform-origin:0 50%">Formatting</span>
<svg class="b" style="left:887.5px;top:133.2px" width="6.6" height="4.4" viewBox="0 0 6.6 4.4"><path d="M1 1 L3.3 3.4 L5.6 1" fill="none" stroke="#1f1f1f" stroke-width="1.2" stroke-linecap="round" stroke-linejoin="round"/></svg>
<span class="t" style="left:900.5px;top:114.62px;font-size:12px;color:#1f1f1f;transform:scaleX(0.907);transform-origin:0 50%">Format as</span>
<span class="t" style="left:907px;top:129.62px;font-size:12px;color:#1f1f1f;transform:scaleX(0.906);transform-origin:0 50%">Table</span>
<svg class="b" style="left:936.3px;top:133.2px" width="6.6" height="4.4" viewBox="0 0 6.6 4.4"><path d="M1 1 L3.3 3.4 L5.6 1" fill="none" stroke="#1f1f1f" stroke-width="1.2" stroke-linecap="round" stroke-linejoin="round"/></svg>
<div class="b" style="left:954.5px;top:85.5px;width:302px;height:58.5px;background:#fff;border:1px solid #c6c6c6;border-radius:4px"></div>
<div class="b" style="left:955.5px;top:87.5px;width:99.5px;height:27.5px;background:#fff;border:1px solid #8c8c8c;box-shadow:inset 0 0 0 1px #e2e2e2, inset 0 0 0 2px #bdbdbd"></div>
<span class="t" style="left:962.5px;top:95.82px;font-size:12.5px;color:#111;transform:scaleX(1.005);transform-origin:0 50%">Normal</span>
<div class="b" style="left:1058px;top:90.8px;width:94px;height:20.8px;background:#ff9f9f"></div>
<span class="t" style="left:1061.8px;top:95.82px;font-size:12.5px;color:#b1262b;transform:scaleX(0.931);transform-origin:0 50%">Bad</span>
<div class="b" style="left:1158px;top:90.8px;width:94px;height:20.8px;background:#9fdc9e"></div>
<span class="t" style="left:1161.8px;top:95.82px;font-size:12.5px;color:#0d5a12;transform:scaleX(0.948);transform-origin:0 50%">Good</span>
<div class="b" style="left:958px;top:118px;width:94px;height:20.8px;background:#ffd85e"></div>
<span class="t" style="left:962.5px;top:123.02px;font-size:12.5px;color:#8a4a0c;transform:scaleX(1.005);transform-origin:0 50%">Neutral</span>
<div class="b" style="left:1058px;top:118px;width:94px;height:20.8px;background:#e3e3e3;border:1px solid #858585"></div>
<span class="t" style="left:1061.8px;top:123.02px;font-size:12.5px;font-weight:700;color:#ec4d10;transform:scaleX(0.954);transform-origin:0 50%">Calculation</span>
<div class="b" style="left:1158px;top:118px;width:94px;height:20.8px;background:#6b6b6b;border:1px solid #2c2c2c;box-shadow:inset 0 0 0 1px #8a8a8a, inset 0 0 0 2px #3a3a3a"></div>
<span class="t" style="left:1161.8px;top:123.02px;font-size:12.5px;font-weight:700;color:#fff;transform:scaleX(0.943);transform-origin:0 50%">Check Cell</span>
<div class="b" style="left:1255.5px;top:85.5px;width:22.5px;height:58.5px;background:#fff;border:1px solid #7c7c7c;border-radius:4px"></div>
<div class="b" style="left:1262.8px;top:111.4px;width:7px;height:1.1px;background:#1f1f1f"></div>
<svg class="b" style="left:1262px;top:114px" width="9" height="5" viewBox="0 0 9 5"><path d="M1.4 0.8 L4.4 3.8 L7.4 0.8 Z" fill="#1f1f1f"/></svg>
<span class="t" style="left:1302px;top:116.02px;font-size:12px;color:#1f1f1f;transform:scaleX(0.900);transform-origin:0 50%">Insert</span>
<svg class="b" style="left:1311.5px;top:133.9px" width="7" height="4.6" viewBox="0 0 7 4.6"><path d="M1 1 L3.5 3.6 L6 1" fill="none" stroke="#1f1f1f" stroke-width="1.2" stroke-linecap="round" stroke-linejoin="round"/></svg>
<span class="t" style="left:1340px;top:116.02px;font-size:12px;color:#1f1f1f;transform:scaleX(0.923);transform-origin:0 50%">Delete</span>
<svg class="b" style="left:1352px;top:133.9px" width="7" height="4.6" viewBox="0 0 7 4.6"><path d="M1 1 L3.5 3.6 L6 1" fill="none" stroke="#1f1f1f" stroke-width="1.2" stroke-linecap="round" stroke-linejoin="round"/></svg>
<span class="t" style="left:1379.4px;top:114.82px;font-size:12px;color:#1f1f1f;transform:scaleX(0.926);transform-origin:0 50%">Format</span>
<svg class="b" style="left:1392.5px;top:132.5px" width="7" height="4.6" viewBox="0 0 7 4.6"><path d="M1 1 L3.5 3.6 L6 1" fill="none" stroke="#1f1f1f" stroke-width="1.2" stroke-linecap="round" stroke-linejoin="round"/></svg>
<span class="t" style="left:1454.4px;top:84.12px;font-size:12px;color:#1f1f1f;transform:scaleX(0.912);transform-origin:0 50%">AutoSum</span>
<svg class="b" style="left:1516.1px;top:87.1px" width="7" height="4.6" viewBox="0 0 7 4.6"><path d="M1 1 L3.5 3.6 L6 1" fill="none" stroke="#1f1f1f" stroke-width="1.2" stroke-linecap="round" stroke-linejoin="round"/></svg>
<span class="t" style="left:1454.4px;top:107.92px;font-size:12px;color:#1f1f1f;transform:scaleX(0.887);transform-origin:0 50%">Fill</span>
<svg class="b" style="left:1471.7px;top:111px" width="6.6" height="4.4" viewBox="0 0 6.6 4.4"><path d="M1 1 L3.3 3.4 L5.6 1" fill="none" stroke="#1f1f1f" stroke-width="1.2" stroke-linecap="round" stroke-linejoin="round"/></svg>
<span class="t" style="left:1454.4px;top:131.92px;font-size:12px;color:#1f1f1f;transform:scaleX(0.868);transform-origin:0 50%">Clear</span>
<svg class="b" style="left:1482.7px;top:134.6px" width="6.6" height="4.4" viewBox="0 0 6.6 4.4"><path d="M1 1 L3.3 3.4 L5.6 1" fill="none" stroke="#1f1f1f" stroke-width="1.2" stroke-linecap="round" stroke-linejoin="round"/></svg>
<span class="t" style="left:1537px;top:114.82px;font-size:12px;color:#1f1f1f;transform:scaleX(0.954);transform-origin:0 50%">Sort &amp;</span>
<span class="t" style="left:1535.4px;top:129.62px;font-size:12px;color:#1f1f1f;transform:scaleX(0.923);transform-origin:0 50%">Filter</span>
<svg class="b" style="left:1563.2px;top:133px" width="6.6" height="4.4" viewBox="0 0 6.6 4.4"><path d="M1 1 L3.3 3.4 L5.6 1" fill="none" stroke="#1f1f1f" stroke-width="1.2" stroke-linecap="round" stroke-linejoin="round"/></svg>
<span class="t" style="left:1580.6px;top:114.82px;font-size:12px;color:#1f1f1f;transform:scaleX(0.928);transform-origin:0 50%">Find &amp;</span>
<span class="t" style="left:1576.6px;top:129.62px;font-size:12px;color:#1f1f1f;transform:scaleX(0.891);transform-origin:0 50%">Select</span>
<svg class="b" style="left:1610.1px;top:133px" width="6.6" height="4.4" viewBox="0 0 6.6 4.4"><path d="M1 1 L3.3 3.4 L5.6 1" fill="none" stroke="#1f1f1f" stroke-width="1.2" stroke-linecap="round" stroke-linejoin="round"/></svg>
<span class="t" style="left:1636.5px;top:114.62px;font-size:12px;color:#1f1f1f;transform:scaleX(0.956);transform-origin:0 50%">Add-ins</span>
<span class="t" style="left:1695px;top:115.82px;font-size:12px;color:#1f1f1f;transform:scaleX(0.985);transform-origin:0 50%">Copilot</span>
<svg class="b" style="left:1709px;top:133.6px" width="7" height="4.6" viewBox="0 0 7 4.6"><path d="M1 1 L3.5 3.6 L6 1" fill="none" stroke="#1f1f1f" stroke-width="1.2" stroke-linecap="round" stroke-linejoin="round"/></svg>
<span class="t" style="left:1761.7px;top:114.62px;font-size:12px;color:#1f1f1f;transform:scaleX(0.897);transform-origin:0 50%">Create</span>
<span class="t" style="left:1764px;top:129.62px;font-size:12px;color:#1f1f1f;transform:scaleX(0.844);transform-origin:0 50%">a PDF</span>
<span class="t" style="left:1826.5px;top:114.62px;font-size:12px;color:#1f1f1f;transform:scaleX(0.897);transform-origin:0 50%">Solver</span>
<svg class="b" style="left:1893.35px;top:152.1px" width="10.5" height="6.2" viewBox="0 0 10.5 6.2"><path d="M1 1 L5.25 5.2 L9.5 1" fill="none" stroke="#1f1f1f" stroke-width="1.25" stroke-linecap="round" stroke-linejoin="round"/></svg>
<svg class="b" style="left:27px;top:81px" width="28" height="31" viewBox="0 0 28 31"><path d="M1.8 5.8 H19.6 V27 H1.8 Z" fill="#dedede" stroke="#8e8e8e" stroke-width="1.3"/><path d="M5.6 8.6 C4.6 5.4 6.6 4.6 8.2 4.6 C8.2 2.2 9.6 1.2 10.9 1.2 C12.2 1.2 13.6 2.2 13.6 4.6 C15.2 4.6 17.2 5.4 16.2 8.6 Z" fill="#e6e6e6" stroke="#8e8e8e" stroke-width="1.2" stroke-linejoin="round"/><rect x="13.2" y="13.2" width="12.6" height="16.2" fill="#dedede" stroke="#8e8e8e" stroke-width="1.3"/></svg>
<svg class="b" style="left:64px;top:81px" width="13" height="17" viewBox="0 0 13 17"><path d="M3.2 1 L9.6 12.2 M9.8 1 L3.4 12.2" stroke="#222" stroke-width="1.25" stroke-linecap="round"/><circle cx="3.7" cy="13.8" r="1.9" fill="none" stroke="#1a62d2" stroke-width="1.3"/><circle cx="9.3" cy="13.8" r="1.9" fill="none" stroke="#1a62d2" stroke-width="1.3"/></svg>
<svg class="b" style="left:62px;top:104.5px" width="17" height="17" viewBox="0 0 17 17"><path d="M6.6 13.8 H1.6 V1.6 H7.4 L8.6 3" fill="none" stroke="#222" stroke-width="1.3" stroke-linejoin="round"/><path d="M7 4.2 H12.4 L15.4 7.4 V15.6 H7 Z" fill="#fff" stroke="#222" stroke-width="1.3" stroke-linejoin="round"/><path d="M12.2 4.4 V7.6 H15.2" fill="none" stroke="#222" stroke-width="1.1"/><path d="M9 10.2 H13.4 M9 12.2 H13.4 M9 14 H12.4" stroke="#444" stroke-width="0.9"/></svg>
<svg class="b" style="left:62px;top:128.5px" width="18" height="17" viewBox="0 0 18 17"><path d="M1.4 8.2 L8 3.6 L12.2 9.6 L7.2 15.4 Z" fill="#f59a23" stroke="#e03c14" stroke-width="1.3" stroke-linejoin="round"/><path d="M4.4 8.6 L7.2 12.6 M6.4 6.8 L9.6 11" stroke="#e03c14" stroke-width="1"/><path d="M7.4 3.2 L10.2 1.6 L14.8 8 L12.6 10.2 Z" fill="#fff" stroke="#222" stroke-width="1.3" stroke-linejoin="round"/><path d="M11.6 3.8 L15.4 1.2 L16.6 2.8 L13 5.8" fill="#fff" stroke="#222" stroke-width="1.3" stroke-linejoin="round"/></svg>
<svg class="b" style="left:269.5px;top:118.5px" width="16" height="16" viewBox="0 0 16 16"><rect x="1.6" y="1.6" width="12.8" height="12.8" fill="#fff" stroke="#111" stroke-width="2.2"/><path d="M8 2.6 V13.4 M2.6 8 H13.4" stroke="#777" stroke-width="0.9" stroke-dasharray="1.4 0.9"/></svg>
<svg class="b" style="left:310px;top:118px" width="16" height="17" viewBox="0 0 16 17"><path d="M6.4 1.4 L12.4 7.4 L7.2 12 L2.4 7.2 L6.8 3.4" fill="#fff" stroke="#222" stroke-width="1.3" stroke-linejoin="round"/><path d="M5.2 1.2 L8.2 4.6" stroke="#222" stroke-width="1.2"/><path d="M12.4 6.6 C14 7.6 14.4 9.4 13.6 11.2" fill="none" stroke="#1a62d2" stroke-width="1.5" stroke-linecap="round"/><rect x="0.6" y="13" width="14.6" height="3.2" fill="#ffff8c"/></svg>
<svg class="b" style="left:396px;top:84px" width="130" height="56" viewBox="0 0 130 56"><path d="M5.20 6.00h13.60 M8.40 9.80h7.40 M5.20 13.40h13.60 M29.20 8.60h13.60 M31.60 12.30h9.00 M29.20 16.00h13.60 M53.30 12.30h13.40 M55.00 16.00h9.60 M53.30 19.80h13.40 M5.20 36.80h13.60 M5.20 40.60h9.80 M5.20 44.30h13.60 M5.20 48.00h9.80 M29.20 36.80h13.60 M31.30 40.60h9.40 M29.20 44.30h13.60 M31.30 48.00h9.40 M53.20 36.80h13.60 M57.20 40.60h9.60 M53.20 44.30h13.60 M57.20 48.00h9.60 M79.20 36.80h13.80 M79.20 48.00h13.80 M87.60 40.60h5.40 M87.60 44.30h5.40 M103.20 36.80h13.80 M103.20 48.00h13.80 M111.60 40.60h5.40 M111.60 44.30h5.40" fill="none" stroke="#222" stroke-width="1.4"/></svg>
<svg class="b" style="left:474.5px;top:122.5px" width="9" height="8" viewBox="0 0 9 8"><path d="M1 4 H7.6 M3.8 1.2 L1 4 L3.8 6.8" fill="none" stroke="#1a62d2" stroke-width="1.35" stroke-linecap="round" stroke-linejoin="round"/></svg>
<svg class="b" style="left:498.5px;top:122.5px" width="9" height="8" viewBox="0 0 9 8"><path d="M1 4 H7.6 M4.8 1.2 L7.6 4 L4.8 6.8" fill="none" stroke="#1a62d2" stroke-width="1.35" stroke-linecap="round" stroke-linejoin="round"/></svg>
<span class="t" style="left:472.6px;top:88.2px;font-size:10.5px;color:#222;transform:rotate(-52deg);transform-origin:50% 50%">ab</span>
<svg class="b" style="left:478px;top:91px" width="14" height="14" viewBox="0 0 14 14"><path d="M1.8 12.2 L11.4 2.6 M6.6 2.2 H11.8 V7.4" fill="none" stroke="#1a62d2" stroke-width="1.3" stroke-linecap="round" stroke-linejoin="round"/></svg>
<span class="t" style="left:534.6px;top:87.62px;font-size:10.5px;color:#222;transform:scaleX(0.976);transform-origin:0 50%">ab</span>
<span class="t" style="left:534.8px;top:95.22px;font-size:10.5px;color:#222">c</span>
<svg class="b" style="left:540px;top:95.5px" width="10" height="10" viewBox="0 0 10 10"><path d="M8.4 1 C9.4 4.6 7.4 6.2 2 6.2 M4.4 3.8 L1.8 6.2 L4.4 8.8" fill="none" stroke="#1a62d2" stroke-width="1.35" stroke-linecap="round" stroke-linejoin="round"/></svg>
<svg class="b" style="left:531.5px;top:118.5px" width="16.5" height="16" viewBox="0 0 16.5 16"><rect x="1.2" y="1.2" width="14" height="13.4" fill="#fff" stroke="#333" stroke-width="1.3"/><rect x="2" y="2" width="12.4" height="2.4" fill="#c9c9c9"/><path d="M8.2 1.4 V4.6 M8.2 11 V14.4" stroke="#333" stroke-width="1.1"/><rect x="1.2" y="4.8" width="14" height="6" fill="#eaf2fd" stroke="#1a62d2" stroke-width="1.3"/><path d="M3.6 7.8 H12.8 M5.4 6 L3.6 7.8 L5.4 9.6 M11 6 L12.8 7.8 L11 9.6" fill="none" stroke="#1a62d2" stroke-width="1.15" stroke-linejoin="round"/></svg>
<svg class="b" style="left:768.5px;top:118px" width="17" height="17" viewBox="0 0 17 17"><path d="M1.4 5.6 H8.6 M4 3 L1.4 5.6 L4 8.2" fill="none" stroke="#1a62d2" stroke-width="1.35" stroke-linecap="round" stroke-linejoin="round"/><ellipse cx="13.4" cy="4.6" rx="1.7" ry="2.8" fill="none" stroke="#222" stroke-width="1.1"/><rect x="3.6" y="14.4" width="1.2" height="1.2" fill="#222"/><ellipse cx="8.4" cy="12.6" rx="1.7" ry="2.8" fill="none" stroke="#222" stroke-width="1.1"/><ellipse cx="13.4" cy="12.6" rx="1.7" ry="2.8" fill="none" stroke="#222" stroke-width="1.1"/></svg>
<svg class="b" style="left:792.5px;top:118px" width="17" height="17" viewBox="0 0 17 17"><rect x="3.8" y="6.4" width="1.2" height="1.2" fill="#222"/><ellipse cx="8.6" cy="4.6" rx="1.7" ry="2.8" fill="none" stroke="#222" stroke-width="1.1"/><ellipse cx="13.6" cy="4.6" rx="1.7" ry="2.8" fill="none" stroke="#222" stroke-width="1.1"/><path d="M1 12.2 H8.2 M5.6 9.6 L8.2 12.2 L5.6 14.8" fill="none" stroke="#1a62d2" stroke-width="1.35" stroke-linecap="round" stroke-linejoin="round"/><rect x="9.2" y="14.4" width="1.2" height="1.2" fill="#222"/><ellipse cx="13.6" cy="12.6" rx="1.7" ry="2.8" fill="none" stroke="#222" stroke-width="1.1"/></svg>
<svg class="b" style="left:846px;top:83px" width="32" height="26" viewBox="0 0 32 26"><path d="M3.00 3.00 V23.20 M7.30 3.00 V23.20 M23.40 3.00 V23.20 M28.80 3.00 V23.20 M2.25 3.00 H29.55 M2.25 9.80 H29.55 M2.25 16.30 H29.55 M2.25 23.20 H29.55" fill="none" stroke="#333" stroke-width="1.5"/><rect x="7.3" y="3.0" width="12.6" height="6.6" fill="#e8635c" stroke="#d9391d" stroke-width="1.2"/><rect x="7.3" y="16.4" width="14.6" height="6.6" fill="#e8635c" stroke="#d9391d" stroke-width="1.2"/><rect x="7.3" y="10.0" width="8.2" height="6.0" fill="#2f7de1" stroke="#1553b5" stroke-width="1"/></svg>
<svg class="b" style="left:909px;top:83px" width="34" height="30" viewBox="0 0 34 30"><rect x="11.0" y="9.6" width="18.0" height="13.8" fill="#2f7de1"/><path d="M3.20 3.00 V23.20 M11.20 3.00 V23.20 M20.20 3.00 V23.20 M28.40 3.00 V23.20 M2.45 3.00 H29.15 M2.45 9.80 H29.15 M2.45 16.60 H29.15 M2.45 23.20 H29.15" fill="none" stroke="#333" stroke-width="1.5"/><path d="M29.6 10.4 L19.6 20.4" stroke="#222" stroke-width="4.2" stroke-linecap="round"/><path d="M29.4 10.6 L19.8 20.2" stroke="#fff" stroke-width="2" stroke-linecap="round"/><path d="M17.4 19.4 C14.0 20.0 14.4 25.0 9.6 25.6 C13.0 28.4 20.0 27.6 20.8 22.6 C20.4 21.0 19.0 19.6 17.4 19.4 Z" fill="#2f7de1" stroke="#1553b5" stroke-width="1"/></svg>
<svg class="b" style="left:1298px;top:80px" width="35" height="28" viewBox="0 0 35 28"><path d="M4.60 6.00 V25.80 M13.20 6.00 V25.80 M22.40 6.00 V25.80 M30.60 6.00 V25.80 M3.85 6.00 H31.35 M3.85 12.80 H31.35 M3.85 19.40 H31.35 M3.85 25.80 H31.35" fill="none" stroke="#333" stroke-width="1.5"/><rect x="9.4" y="12.4" width="23.6" height="7.4" rx="1" fill="#2f7de1" stroke="#1553b5" stroke-width="1.1"/><path d="M13.2 12.6 V19.6 M22.4 12.6 V19.6" stroke="#1553b5" stroke-width="1.1"/><path d="M9.0 9.6 L2.8 16.0 L9.0 22.4" fill="none" stroke="#1a62d2" stroke-width="1.4" stroke-linecap="round" stroke-linejoin="round"/><path d="M4.4 16.0 H15.0" stroke="#eaf2fd" stroke-width="1.3"/></svg>
<svg class="b" style="left:1340px;top:80px" width="33" height="28" viewBox="0 0 33 28"><path d="M3.40 6.00 V12.80 M3.40 19.40 V25.80 M11.80 6.00 V25.80 M20.60 6.00 V25.80 M28.60 6.00 V25.80 M2.65 6.00 H29.35 M2.65 12.80 H29.35 M2.65 19.40 H29.35 M2.65 25.80 H29.35" fill="none" stroke="#333" stroke-width="1.5"/><rect x="6.6" y="12.6" width="15.0" height="7.0" fill="#2f7de1" stroke="#1553b5" stroke-width="1.1"/><path d="M15.6 12.8 V19.4" stroke="#1553b5" stroke-width="1.1"/><rect x="21.8" y="11.2" width="6" height="11" fill="#fff"/><path d="M20.0 11.6 L30.0 21.6 M30.0 11.6 L20.0 21.6" stroke="#ee2a1c" stroke-width="1.5" stroke-linecap="round"/></svg>
<svg class="b" style="left:1381px;top:80px" width="31" height="28" viewBox="0 0 31 28"><path d="M3.00 6.00 V25.80 M10.00 6.00 V25.80 M21.80 6.00 V25.80 M28.40 6.00 V25.80 M2.25 6.00 H29.15 M2.25 12.80 H29.15 M2.25 19.40 H29.15 M2.25 25.80 H29.15" fill="none" stroke="#333" stroke-width="1.5"/><rect x="10.0" y="12.6" width="11.8" height="7.0" fill="#2f7de1" stroke="#1553b5" stroke-width="1.1"/><path d="M8.6 2.6 H22.6 M8.8 1.2 V4.0 M22.4 1.2 V4.0" stroke="#1a62d2" stroke-width="1.3"/></svg>
<svg class="b" style="left:1436px;top:81.5px" width="14" height="16" viewBox="0 0 14 16"><path d="M11.8 3.4 V1.4 H1.8 L7.2 7.6 L1.8 13.8 H11.8 V11.8" fill="none" stroke="#222" stroke-width="1.25" stroke-linejoin="miter"/></svg>
<svg class="b" style="left:1434.5px;top:105.5px" width="17" height="15" viewBox="0 0 17 15"><rect x="1.4" y="1.4" width="14" height="12" fill="#fff" stroke="#222" stroke-width="1.3"/><rect x="1" y="1" width="14.8" height="2.6" fill="#222"/><path d="M8.4 5.4 V11 M5.8 8.6 L8.4 11.2 L11 8.6" fill="none" stroke="#1a62d2" stroke-width="1.3" stroke-linecap="round" stroke-linejoin="round"/></svg>
<svg class="b" style="left:1434.5px;top:129px" width="17" height="17" viewBox="0 0 17 17"><path d="M9.6 1.4 L15.4 6.2 L6.6 15 L1.2 10.4 Z" fill="#fff" stroke="#8a2b90" stroke-width="1.4" stroke-linejoin="round"/><path d="M4.4 7.4 L10 12.2 L6.6 15 L1.2 10.4 Z" fill="#c77dcc" stroke="#8a2b90" stroke-width="1.4" stroke-linejoin="round"/></svg>
<span class="t" style="left:1539px;top:81.82px;font-size:15px;color:#1a62d2">A</span>
<span class="t" style="left:1539.4px;top:95.22px;font-size:15px;color:#222;transform:scaleX(1.026);transform-origin:0 50%">Z</span>
<svg class="b" style="left:1549px;top:88px" width="18" height="18" viewBox="0 0 18 18"><path d="M1.6 1.8 H16.6 L10.6 8.8 V16 H7.8 V8.8 Z" fill="#fff" stroke="#222" stroke-width="1.25" stroke-linejoin="round"/></svg>
<svg class="b" style="left:1581px;top:81px" width="31" height="31" viewBox="0 0 31 31"><circle cx="19.3" cy="11.4" r="9.6" fill="none" stroke="#222" stroke-width="1.25"/><path d="M12.2 18.6 L1.6 28.8" stroke="#222" stroke-width="1.3" stroke-linecap="round"/></svg>
<svg class="b" style="left:1641.5px;top:81.5px" width="29" height="29" viewBox="0 0 29 29"><rect x="1.4" y="1.4" width="26.2" height="26.2" fill="#fdf3f0" stroke="#b5461f" stroke-width="1.5"/><rect x="4.4" y="4.4" width="8.6" height="8.6" fill="#fff" stroke="#e3261a" stroke-width="1.4"/><rect x="16" y="4.4" width="8.6" height="8.6" fill="#fff" stroke="#e3261a" stroke-width="1.4"/><rect x="4.4" y="16" width="8.6" height="8.6" fill="#fff" stroke="#e3261a" stroke-width="1.4"/><rect x="16" y="16" width="8.6" height="8.6" fill="#fff" stroke="#e3261a" stroke-width="1.4"/></svg>
<svg class="b" style="left:1698px;top:81.5px" width="30" height="29" viewBox="0 0 30 29"><defs><clipPath id="cpc"><path d="M9.4 1.6 H19.4 C21.4 1.6 22.6 2.6 23.2 4.6 L24.4 8.8 C27.4 9 29 11.6 28 15 L26.4 20.6 C25.4 24.6 23 27.4 19.6 27.4 H10.4 C8.4 27.4 7.2 26.4 6.6 24.4 L5.6 20.4 C2.4 20.2 1 17.6 2 14 L3.6 8.4 C4.6 4.4 6.4 1.6 9.4 1.6 Z"/></clipPath></defs><g clip-path="url(#cpc)"><rect x="0" y="0" width="30" height="29" fill="#e8381e"/><path d="M0 0 H30 V9.6 H0 Z" fill="#1b57c6"/><path d="M0 9.2 H13 L10 16.4 H0 Z" fill="#2a7b45"/><path d="M0 15.6 H10.4 L9 19.6 L0 21 Z" fill="#d9a22c"/><path d="M18.6 8.6 L22 3 L30 8 V17.8 H19.6 Z" fill="#6a3aa2"/><path d="M22.4 3.6 L18.6 9.4 H30 V6 Z" fill="#4a48b8"/><path d="M14.2 9.4 H18.8 L14.6 19.8 H10 Z" fill="#fff"/></g></svg>
<svg class="b" style="left:1768.5px;top:83px" width="27" height="29" viewBox="0 0 27 29"><path d="M12.6 22.4 H4.4 Q1.6 22.4 1.6 19.6 V4.4 Q1.6 1.6 4.4 1.6 H13.6 L19 7 V13" fill="none" stroke="#1a62d2" stroke-width="1.35" stroke-linejoin="round"/><path d="M10.2 5.6 C9.4 9.6 7.6 13.6 5 15.4 C8.6 13.2 12.2 12.2 15 12.8 C12.8 11.4 10.6 8.6 10.2 5.6 Z" fill="none" stroke="#1a62d2" stroke-width="1.05" stroke-linejoin="round"/><rect x="11.2" y="17.2" width="9" height="5.4" rx="2.7" fill="none" stroke="#1a62d2" stroke-width="1.45" transform="rotate(-45 15.7 19.9)"/><rect x="16" y="12.6" width="9" height="5.4" rx="2.7" fill="none" stroke="#1a62d2" stroke-width="1.45" transform="rotate(-45 20.5 15.3)"/></svg>
<svg class="b" style="left:1826px;top:85px" width="32" height="22" viewBox="0 0 32 22"><path d="M4.4 1.8 L28.8 3.8 L25.6 16.4 L4.8 18 Z" fill="#5b96dc"/><path d="M1.4 6 L14 4.6 L15.2 17 L4.2 18.8 Z" fill="#1b5cb8"/><path d="M14 3.6 L29.6 6.2 L26.4 16.2 L15.2 17.6 Z" fill="#3f82d4"/><circle cx="17.8" cy="10.2" r="4.4" fill="#f7c21a" stroke="#3a2a08" stroke-width="0.9"/><rect x="15.9" y="14" width="3.8" height="3.6" rx="0.8" fill="#2a2a2a"/><path d="M16.4 9.2 L17.8 11.6 L19.2 9.2" fill="none" stroke="#6a4a08" stroke-width="0.8"/></svg>
<div class="b" style="left:0px;top:985px;width:1920px;height:30px;background:#dddddd"></div>
<svg class="b" style="left:22px;top:994px" width="9" height="11" viewBox="0 0 9 11"><path d="M6.6 1.2 L2 5.5 L6.6 9.8" fill="none" stroke="#555" stroke-width="1.2" stroke-linecap="round" stroke-linejoin="round"/></svg>
<svg class="b" style="left:52px;top:994px" width="9" height="11" viewBox="0 0 9 11"><path d="M2.4 1.2 L7 5.5 L2.4 9.8" fill="none" stroke="#555" stroke-width="1.2" stroke-linecap="round" stroke-linejoin="round"/></svg>
<div class="b" style="left:106px;top:985px;width:53.4px;height:26.6px;background:#fff;border-radius:0 0 6px 6px;box-shadow:0 0.5px 1px rgba(0,0,0,0.12)"></div>
<svg class="b" style="left:102px;top:985px" width="4.2" height="4.2" viewBox="0 0 4.2 4.2"><path d="M0 0 H4.2 V4.2 Q4.2 0 0 0 Z" fill="#fff"/></svg>
<svg class="b" style="left:159.2px;top:985px" width="4.2" height="4.2" viewBox="0 0 4.2 4.2"><path d="M4.2 0 H0 V4.2 Q0 0 4.2 0 Z" fill="#fff"/></svg>
<span class="t" style="left:113.4px;top:990.22px;font-size:14.2px;font-weight:700;color:#111;transform:scaleX(0.936);transform-origin:0 50%">Model</span>
<div class="b" style="left:113.4px;top:1006.6px;width:38.4px;height:2.2px;background:#1a6b35"></div>
<div class="b" style="left:163px;top:992px;width:1px;height:16.5px;background:#bdbdbd"></div>
<div class="b" style="left:223.2px;top:992px;width:1px;height:16.5px;background:#bdbdbd"></div>
<span class="t" style="left:175px;top:992.82px;font-size:14.2px;color:#222;transform:scaleX(0.949);transform-origin:0 50%">About</span>
<svg class="b" style="left:262.5px;top:993.5px" width="11" height="11" viewBox="0 0 11 11"><path d="M5.5 0.6 V10.4 M0.6 5.5 H10.4" stroke="#222" stroke-width="1.35"/></svg>
<div class="b" style="left:1718.5px;top:994.8px;width:2px;height:2px;background:#333;border-radius:1px"></div>
<div class="b" style="left:1718.5px;top:998.6px;width:2px;height:2px;background:#333;border-radius:1px"></div>
<div class="b" style="left:1718.5px;top:1002.4px;width:2px;height:2px;background:#333;border-radius:1px"></div>
<svg class="b" style="left:1739px;top:995px" width="8" height="10" viewBox="0 0 8 10"><path d="M6.6 1 V9 L1 5 Z" fill="#2b2b2b" stroke="#2b2b2b" stroke-width="0.8" stroke-linejoin="round"/></svg>
<div class="b" style="left:1750px;top:995px;width:94px;height:9px;background:#2e2e2e;border-radius:4.5px"></div>
<svg class="b" style="left:1891px;top:995px" width="8" height="10" viewBox="0 0 8 10"><path d="M1.4 1 V9 L7 5 Z" fill="#2b2b2b" stroke="#2b2b2b" stroke-width="0.8" stroke-linejoin="round"/></svg>
<div class="b" style="left:0px;top:1015px;width:1920px;height:1px;background:#f4f4f4"></div>
<div class="b" style="left:0px;top:1016px;width:1920px;height:19px;background:#dddddd"></div>
<span class="t" style="left:10.2px;top:1020.02px;font-size:11.5px;color:#222;transform:scaleX(0.812);transform-origin:0 50%">Ready</span>
<svg class="b" style="left:56px;top:1019px" width="15" height="13" viewBox="0 0 15 13"><rect x="1" y="1" width="13" height="10.6" fill="none" stroke="#333" stroke-width="1.1"/><path d="M1 3.4 H14" stroke="#333" stroke-width="1.6"/><path d="M2.8 6 H7 M2.8 8.2 H6" stroke="#333" stroke-width="1"/><circle cx="10.2" cy="8" r="2.7" fill="#ddd" stroke="#333" stroke-width="1.1"/><circle cx="10.2" cy="8" r="1.1" fill="#333"/></svg>
<svg class="b" style="left:86px;top:1018px" width="16" height="15" viewBox="0 0 16 15"><circle cx="6.6" cy="2.6" r="1.7" fill="none" stroke="#222" stroke-width="1.1"/><path d="M1.4 5.6 H11.8 M6.6 5.8 V9 M6.6 9 L3.4 13.6 M6.6 9 L8.6 11.6" fill="none" stroke="#222" stroke-width="1.2" stroke-linecap="round"/><path d="M10 10.2 L14.2 14.2 M14.2 10.2 L10 14.2" stroke="#222" stroke-width="1.15"/></svg>
<span class="t" style="left:103.7px;top:1020.02px;font-size:11.2px;font-weight:700;color:#222;transform:scaleX(0.852);transform-origin:0 50%">Accessibility: Investigate</span>
<div class="b" style="left:1640px;top:1016px;width:38px;height:19px;background:#bfbfbf"></div>
<svg class="b" style="left:1651.5px;top:1018px" width="15" height="15" viewBox="0 0 15 15"><rect x="1" y="1" width="12.6" height="12.6" fill="#fff" stroke="#222" stroke-width="1.5"/><path d="M5.2 1 V13.6 M9.4 1 V13.6 M1 5.2 H13.6 M1 9.4 H13.6" stroke="#222" stroke-width="1.3"/></svg>
<svg class="b" style="left:1689px;top:1018px" width="16" height="15" viewBox="0 0 16 15"><rect x="1" y="1" width="13.4" height="12.4" fill="none" stroke="#333" stroke-width="1.2"/><rect x="3.8" y="3.4" width="7.8" height="7.8" fill="none" stroke="#333" stroke-width="1"/><path d="M5 5.6 H10.4 M5 7.4 H10.4 M5 9.2 H10.4" stroke="#333" stroke-width="0.8"/></svg>
<svg class="b" style="left:1726.5px;top:1018px" width="16" height="15" viewBox="0 0 16 15"><rect x="1" y="1" width="13.4" height="12.4" fill="none" stroke="#333" stroke-width="1.3"/><path d="M5.6 1 V7.6 H1 M5.6 7.6 H9.8 V1" fill="none" stroke="#333" stroke-width="1.2"/></svg>
<div class="b" style="left:1758px;top:1024.8px;width:7px;height:1.1px;background:#333"></div>
<div class="b" style="left:1770px;top:1025px;width:94px;height:1px;background:#555"></div>
<div class="b" style="left:1815.2px;top:1019.8px;width:4.4px;height:11px;background:#333;border-radius:0.8px"></div>
<svg class="b" style="left:1867.5px;top:1021px" width="9" height="9" viewBox="0 0 9 9"><path d="M4.5 0.8 V8.2 M0.8 4.5 H8.2" stroke="#333" stroke-width="1.15"/></svg>
<span class="t" style="left:1888px;top:1020.02px;font-size:11.2px;color:#222;transform:scaleX(0.820);transform-origin:0 50%">100%</span>
<svg class="b" style="left:0;top:1035px" width="1920" height="45" shape-rendering="crispEdges"><defs><pattern id="nz" width="120" height="45" patternUnits="userSpaceOnUse"><rect width="120" height="45" fill="#98dfd9"/><path d="M0 0h6v1h-6zM8 0h3v1h-3zM12 0h6v1h-6zM28 0h1v1h-1zM34 0h2v1h-2zM39 0h5v1h-5zM49 0h1v1h-1zM58 0h1v1h-1zM65 0h3v1h-3zM69 0h1v1h-1zM72 0h3v1h-3zM76 0h1v1h-1zM78 0h1v1h-1zM80 0h1v1h-1zM82 0h9v1h-9zM92 0h4v1h-4zM98 0h1v1h-1zM100 0h2v1h-2zM105 0h2v1h-2zM108 0h1v1h-1zM111 0h4v1h-4zM116 0h4v1h-4zM1 1h1v1h-1zM3 1h3v1h-3zM10 1h4v1h-4zM15 1h2v1h-2zM21 1h2v1h-2zM24 1h1v1h-1zM28 1h2v1h-2zM32 1h4v1h-4zM37 1h1v1h-1zM39 1h4v1h-4zM49 1h1v1h-1zM54 1h4v1h-4zM62 1h8v1h-8zM73 1h5v1h-5zM83 1h3v1h-3zM87 1h2v1h-2zM94 1h4v1h-4zM99 1h1v1h-1zM101 1h1v1h-1zM105 1h3v1h-3zM109 1h1v1h-1zM112 1h3v1h-3zM117 1h3v1h-3zM2 2h2v1h-2zM10 2h7v1h-7zM18 2h8v1h-8zM27 2h3v1h-3zM32 2h1v1h-1zM34 2h1v1h-1zM36 2h6v1h-6zM44 2h3v1h-3zM50 2h2v1h-2zM53 2h7v1h-7zM63 2h7v1h-7zM76 2h3v1h-3zM83 2h1v1h-1zM85 2h1v1h-1zM88 2h3v1h-3zM92 2h1v1h-1zM94 2h5v1h-5zM100 2h1v1h-1zM105 2h2v1h-2zM113 2h2v1h-2zM117 2h3v1h-3zM1 3h4v1h-4zM6 3h1v1h-1zM9 3h5v1h-5zM15 3h1v1h-1zM23 3h7v1h-7zM32 3h9v1h-9zM45 3h1v1h-1zM49 3h5v1h-5zM55 3h4v1h-4zM64 3h3v1h-3zM77 3h1v1h-1zM82 3h1v1h-1zM84 3h3v1h-3zM88 3h3v1h-3zM92 3h4v1h-4zM97 3h1v1h-1zM99 3h2v1h-2zM102 3h1v1h-1zM105 3h2v1h-2zM113 3h2v1h-2zM0 4h1v1h-1zM3 4h4v1h-4zM8 4h4v1h-4zM14 4h1v1h-1zM16 4h1v1h-1zM21 4h3v1h-3zM32 4h10v1h-10zM48 4h4v1h-4zM57 4h3v1h-3zM64 4h2v1h-2zM71 4h1v1h-1zM73 4h2v1h-2zM83 4h4v1h-4zM90 4h1v1h-1zM93 4h3v1h-3zM101 4h1v1h-1zM103 4h2v1h-2zM106 4h1v1h-1zM109 4h1v1h-1zM111 4h1v1h-1zM3 5h10v1h-10zM15 5h1v1h-1zM17 5h1v1h-1zM21 5h2v1h-2zM26 5h2v1h-2zM29 5h5v1h-5zM36 5h5v1h-5zM45 5h1v1h-1zM47 5h6v1h-6zM55 5h1v1h-1zM57 5h2v1h-2zM61 5h6v1h-6zM70 5h2v1h-2zM73 5h2v1h-2zM78 5h1v1h-1zM82 5h6v1h-6zM90 5h1v1h-1zM93 5h3v1h-3zM100 5h1v1h-1zM102 5h2v1h-2zM105 5h4v1h-4zM112 5h1v1h-1zM0 6h1v1h-1zM2 6h1v1h-1zM5 6h2v1h-2zM8 6h2v1h-2zM11 6h2v1h-2zM15 6h1v1h-1zM17 6h1v1h-1zM21 6h2v1h-2zM26 6h3v1h-3zM30 6h2v1h-2zM33 6h1v1h-1zM38 6h3v1h-3zM44 6h2v1h-2zM48 6h5v1h-5zM55 6h1v1h-1zM58 6h1v1h-1zM62 6h5v1h-5zM70 6h2v1h-2zM73 6h1v1h-1zM75 6h1v1h-1zM85 6h3v1h-3zM90 6h1v1h-1zM92 6h10v1h-10zM103 6h5v1h-5zM111 6h3v1h-3zM115 6h2v1h-2zM1 7h1v1h-1zM5 7h2v1h-2zM14 7h2v1h-2zM18 7h3v1h-3zM25 7h1v1h-1zM27 7h1v1h-1zM30 7h2v1h-2zM34 7h2v1h-2zM38 7h1v1h-1zM40 7h1v1h-1zM43 7h3v1h-3zM49 7h4v1h-4zM55 7h1v1h-1zM58 7h1v1h-1zM63 7h4v1h-4zM75 7h1v1h-1zM77 7h2v1h-2zM86 7h2v1h-2zM90 7h3v1h-3zM94 7h2v1h-2zM97 7h4v1h-4zM103 7h5v1h-5zM110 7h7v1h-7zM118 7h2v1h-2zM0 8h3v1h-3zM5 8h1v1h-1zM14 8h2v1h-2zM19 8h1v1h-1zM23 8h4v1h-4zM30 8h2v1h-2zM39 8h1v1h-1zM42 8h3v1h-3zM48 8h1v1h-1zM51 8h2v1h-2zM54 8h1v1h-1zM57 8h4v1h-4zM70 8h1v1h-1zM77 8h4v1h-4zM83 8h4v1h-4zM90 8h2v1h-2zM93 8h3v1h-3zM98 8h7v1h-7zM106 8h1v1h-1zM109 8h1v1h-1zM111 8h1v1h-1zM115 8h5v1h-5zM0 9h2v1h-2zM3 9h1v1h-1zM5 9h1v1h-1zM9 9h2v1h-2zM13 9h3v1h-3zM22 9h3v1h-3zM30 9h3v1h-3zM38 9h1v1h-1zM42 9h3v1h-3zM49 9h1v1h-1zM52 9h2v1h-2zM58 9h3v1h-3zM66 9h1v1h-1zM69 9h2v1h-2zM75 9h1v1h-1zM77 9h4v1h-4zM82 9h5v1h-5zM88 9h3v1h-3zM92 9h1v1h-1zM94 9h2v1h-2zM97 9h5v1h-5zM103 9h1v1h-1zM108 9h1v1h-1zM110 9h1v1h-1zM116 9h1v1h-1zM119 9h1v1h-1zM0 10h1v1h-1zM2 10h1v1h-1zM9 10h2v1h-2zM13 10h1v1h-1zM15 10h2v1h-2zM22 10h1v1h-1zM27 10h2v1h-2zM31 10h2v1h-2zM47 10h8v1h-8zM59 10h2v1h-2zM63 10h1v1h-1zM65 10h1v1h-1zM70 10h2v1h-2zM75 10h1v1h-1zM77 10h5v1h-5zM83 10h3v1h-3zM89 10h1v1h-1zM93 10h1v1h-1zM96 10h1v1h-1zM98 10h5v1h-5zM104 10h1v1h-1zM108 10h7v1h-7zM1 11h1v1h-1zM3 11h1v1h-1zM7 11h11v1h-11zM22 11h1v1h-1zM26 11h3v1h-3zM31 11h3v1h-3zM36 11h4v1h-4zM43 11h1v1h-1zM45 11h10v1h-10zM59 11h2v1h-2zM72 11h1v1h-1zM74 11h1v1h-1zM77 11h3v1h-3zM81 11h2v1h-2zM86 11h1v1h-1zM88 11h2v1h-2zM95 11h1v1h-1zM97 11h1v1h-1zM100 11h6v1h-6zM108 11h4v1h-4zM113 11h2v1h-2zM116 11h2v1h-2zM119 11h1v1h-1zM0 12h1v1h-1zM7 12h1v1h-1zM9 12h5v1h-5zM15 12h3v1h-3zM22 12h5v1h-5zM28 12h1v1h-1zM31 12h2v1h-2zM36 12h4v1h-4zM42 12h1v1h-1zM44 12h1v1h-1zM46 12h9v1h-9zM56 12h3v1h-3zM60 12h1v1h-1zM65 12h1v1h-1zM67 12h2v1h-2zM72 12h2v1h-2zM75 12h1v1h-1zM77 12h2v1h-2zM81 12h5v1h-5zM87 12h2v1h-2zM90 12h2v1h-2zM96 12h1v1h-1zM106 12h4v1h-4zM112 12h3v1h-3zM116 12h3v1h-3zM0 13h2v1h-2zM4 13h5v1h-5zM11 13h2v1h-2zM16 13h1v1h-1zM22 13h4v1h-4zM31 13h1v1h-1zM35 13h3v1h-3zM43 13h1v1h-1zM48 13h1v1h-1zM54 13h1v1h-1zM57 13h5v1h-5zM64 13h3v1h-3zM71 13h4v1h-4zM76 13h3v1h-3zM81 13h2v1h-2zM84 13h1v1h-1zM88 13h1v1h-1zM97 13h3v1h-3zM105 13h2v1h-2zM108 13h2v1h-2zM111 13h1v1h-1zM113 13h5v1h-5zM0 14h3v1h-3zM4 14h6v1h-6zM11 14h2v1h-2zM15 14h3v1h-3zM23 14h1v1h-1zM28 14h4v1h-4zM35 14h2v1h-2zM40 14h5v1h-5zM47 14h4v1h-4zM57 14h5v1h-5zM65 14h1v1h-1zM69 14h5v1h-5zM75 14h3v1h-3zM81 14h1v1h-1zM83 14h2v1h-2zM90 14h2v1h-2zM93 14h1v1h-1zM106 14h1v1h-1zM108 14h1v1h-1zM112 14h1v1h-1zM114 14h3v1h-3zM5 15h4v1h-4zM10 15h3v1h-3zM15 15h2v1h-2zM28 15h4v1h-4zM33 15h4v1h-4zM40 15h2v1h-2zM43 15h2v1h-2zM47 15h7v1h-7zM56 15h3v1h-3zM60 15h2v1h-2zM65 15h1v1h-1zM68 15h2v1h-2zM76 15h2v1h-2zM82 15h3v1h-3zM89 15h8v1h-8zM101 15h2v1h-2zM106 15h1v1h-1zM108 15h1v1h-1zM113 15h1v1h-1zM115 15h2v1h-2zM4 16h4v1h-4zM9 16h1v1h-1zM11 16h5v1h-5zM23 16h1v1h-1zM29 16h1v1h-1zM32 16h3v1h-3zM36 16h1v1h-1zM40 16h1v1h-1zM44 16h1v1h-1zM47 16h1v1h-1zM49 16h13v1h-13zM64 16h1v1h-1zM68 16h1v1h-1zM70 16h1v1h-1zM75 16h3v1h-3zM81 16h1v1h-1zM83 16h4v1h-4zM89 16h4v1h-4zM94 16h1v1h-1zM99 16h4v1h-4zM107 16h1v1h-1zM113 16h1v1h-1zM115 16h1v1h-1zM0 17h3v1h-3zM4 17h7v1h-7zM12 17h2v1h-2zM15 17h2v1h-2zM23 17h2v1h-2zM33 17h1v1h-1zM35 17h1v1h-1zM44 17h1v1h-1zM46 17h1v1h-1zM48 17h1v1h-1zM50 17h1v1h-1zM55 17h1v1h-1zM57 17h2v1h-2zM60 17h2v1h-2zM67 17h1v1h-1zM69 17h1v1h-1zM71 17h1v1h-1zM74 17h1v1h-1zM76 17h3v1h-3zM82 17h1v1h-1zM85 17h3v1h-3zM89 17h1v1h-1zM91 17h5v1h-5zM100 17h2v1h-2zM114 17h3v1h-3zM119 17h1v1h-1zM0 18h1v1h-1zM4 18h6v1h-6zM15 18h3v1h-3zM23 18h3v1h-3zM33 18h2v1h-2zM36 18h1v1h-1zM41 18h4v1h-4zM46 18h1v1h-1zM55 18h1v1h-1zM57 18h5v1h-5zM64 18h1v1h-1zM67 18h2v1h-2zM70 18h2v1h-2zM73 18h3v1h-3zM77 18h2v1h-2zM86 18h4v1h-4zM91 18h6v1h-6zM101 18h1v1h-1zM110 18h1v1h-1zM113 18h1v1h-1zM115 18h1v1h-1zM119 18h1v1h-1zM4 19h2v1h-2zM9 19h1v1h-1zM19 19h2v1h-2zM22 19h3v1h-3zM29 19h2v1h-2zM34 19h1v1h-1zM40 19h1v1h-1zM42 19h2v1h-2zM45 19h1v1h-1zM51 19h2v1h-2zM56 19h1v1h-1zM58 19h6v1h-6zM67 19h2v1h-2zM70 19h2v1h-2zM73 19h2v1h-2zM76 19h3v1h-3zM87 19h3v1h-3zM91 19h5v1h-5zM100 19h2v1h-2zM105 19h1v1h-1zM109 19h3v1h-3zM114 19h1v1h-1zM116 19h1v1h-1zM118 19h2v1h-2zM3 20h1v1h-1zM5 20h1v1h-1zM9 20h4v1h-4zM20 20h11v1h-11zM36 20h4v1h-4zM41 20h2v1h-2zM44 20h1v1h-1zM46 20h1v1h-1zM51 20h1v1h-1zM53 20h1v1h-1zM55 20h9v1h-9zM67 20h2v1h-2zM70 20h5v1h-5zM76 20h5v1h-5zM86 20h2v1h-2zM89 20h8v1h-8zM99 20h1v1h-1zM101 20h1v1h-1zM108 20h6v1h-6zM115 20h1v1h-1zM117 20h3v1h-3zM0 21h1v1h-1zM2 21h10v1h-10zM19 21h5v1h-5zM25 21h4v1h-4zM36 21h1v1h-1zM38 21h1v1h-1zM40 21h2v1h-2zM45 21h1v1h-1zM47 21h6v1h-6zM54 21h1v1h-1zM57 21h2v1h-2zM60 21h4v1h-4zM67 21h14v1h-14zM85 21h1v1h-1zM90 21h3v1h-3zM94 21h3v1h-3zM98 21h2v1h-2zM107 21h1v1h-1zM113 21h4v1h-4zM4 22h6v1h-6zM15 22h3v1h-3zM19 22h1v1h-1zM21 22h3v1h-3zM27 22h1v1h-1zM33 22h2v1h-2zM38 22h5v1h-5zM44 22h1v1h-1zM46 22h9v1h-9zM57 22h1v1h-1zM59 22h7v1h-7zM69 22h2v1h-2zM73 22h2v1h-2zM79 22h1v1h-1zM81 22h1v1h-1zM86 22h1v1h-1zM89 22h1v1h-1zM91 22h1v1h-1zM94 22h3v1h-3zM98 22h2v1h-2zM102 22h2v1h-2zM107 22h1v1h-1zM109 22h1v1h-1zM112 22h1v1h-1zM114 22h3v1h-3zM1 23h1v1h-1zM3 23h7v1h-7zM13 23h2v1h-2zM16 23h1v1h-1zM20 23h5v1h-5zM26 23h1v1h-1zM28 23h1v1h-1zM30 23h3v1h-3zM34 23h2v1h-2zM38 23h1v1h-1zM42 23h1v1h-1zM47 23h8v1h-8zM57 23h3v1h-3zM62 23h2v1h-2zM65 23h1v1h-1zM67 23h6v1h-6zM74 23h1v1h-1zM78 23h5v1h-5zM88 23h1v1h-1zM93 23h4v1h-4zM99 23h1v1h-1zM101 23h3v1h-3zM109 23h2v1h-2zM113 23h1v1h-1zM115 23h2v1h-2zM0 24h5v1h-5zM6 24h4v1h-4zM15 24h2v1h-2zM19 24h4v1h-4zM25 24h12v1h-12zM46 24h2v1h-2zM49 24h6v1h-6zM58 24h6v1h-6zM65 24h11v1h-11zM78 24h2v1h-2zM81 24h1v1h-1zM85 24h3v1h-3zM93 24h3v1h-3zM99 24h5v1h-5zM107 24h1v1h-1zM112 24h1v1h-1zM114 24h4v1h-4zM0 25h2v1h-2zM3 25h2v1h-2zM8 25h2v1h-2zM14 25h1v1h-1zM16 25h1v1h-1zM20 25h2v1h-2zM23 25h4v1h-4zM29 25h2v1h-2zM34 25h2v1h-2zM40 25h1v1h-1zM46 25h2v1h-2zM50 25h3v1h-3zM54 25h2v1h-2zM57 25h1v1h-1zM59 25h14v1h-14zM74 25h9v1h-9zM84 25h4v1h-4zM92 25h4v1h-4zM99 25h4v1h-4zM104 25h3v1h-3zM108 25h2v1h-2zM111 25h1v1h-1zM113 25h2v1h-2zM117 25h1v1h-1zM119 25h1v1h-1zM3 26h3v1h-3zM7 26h3v1h-3zM12 26h3v1h-3zM16 26h2v1h-2zM19 26h2v1h-2zM24 26h2v1h-2zM29 26h2v1h-2zM34 26h1v1h-1zM36 26h1v1h-1zM40 26h1v1h-1zM46 26h2v1h-2zM50 26h7v1h-7zM60 26h12v1h-12zM75 26h7v1h-7zM84 26h1v1h-1zM91 26h1v1h-1zM93 26h4v1h-4zM98 26h4v1h-4zM104 26h6v1h-6zM111 26h2v1h-2zM118 26h2v1h-2zM3 27h2v1h-2zM12 27h2v1h-2zM15 27h5v1h-5zM21 27h1v1h-1zM24 27h2v1h-2zM30 27h2v1h-2zM34 27h4v1h-4zM39 27h4v1h-4zM45 27h3v1h-3zM50 27h6v1h-6zM57 27h1v1h-1zM60 27h4v1h-4zM67 27h1v1h-1zM70 27h2v1h-2zM75 27h3v1h-3zM79 27h2v1h-2zM82 27h3v1h-3zM90 27h1v1h-1zM94 27h2v1h-2zM97 27h1v1h-1zM99 27h1v1h-1zM104 27h3v1h-3zM110 27h3v1h-3zM114 27h1v1h-1zM117 27h3v1h-3zM0 28h2v1h-2zM4 28h1v1h-1zM9 28h4v1h-4zM16 28h1v1h-1zM24 28h1v1h-1zM29 28h1v1h-1zM31 28h6v1h-6zM38 28h7v1h-7zM46 28h2v1h-2zM50 28h3v1h-3zM54 28h1v1h-1zM56 28h1v1h-1zM59 28h5v1h-5zM65 28h5v1h-5zM74 28h3v1h-3zM78 28h1v1h-1zM81 28h4v1h-4zM87 28h2v1h-2zM94 28h3v1h-3zM100 28h1v1h-1zM103 28h4v1h-4zM109 28h1v1h-1zM111 28h1v1h-1zM116 28h1v1h-1zM118 28h2v1h-2zM0 29h2v1h-2zM3 29h1v1h-1zM7 29h4v1h-4zM12 29h1v1h-1zM15 29h1v1h-1zM25 29h1v1h-1zM30 29h7v1h-7zM40 29h3v1h-3zM47 29h1v1h-1zM50 29h1v1h-1zM55 29h1v1h-1zM57 29h1v1h-1zM62 29h1v1h-1zM64 29h3v1h-3zM68 29h1v1h-1zM72 29h4v1h-4zM86 29h2v1h-2zM94 29h2v1h-2zM100 29h1v1h-1zM104 29h4v1h-4zM110 29h2v1h-2zM118 29h2v1h-2zM0 30h5v1h-5zM16 30h1v1h-1zM21 30h1v1h-1zM24 30h3v1h-3zM29 30h9v1h-9zM40 30h4v1h-4zM48 30h1v1h-1zM50 30h1v1h-1zM52 30h1v1h-1zM54 30h1v1h-1zM56 30h2v1h-2zM65 30h2v1h-2zM68 30h7v1h-7zM78 30h1v1h-1zM80 30h1v1h-1zM85 30h1v1h-1zM91 30h4v1h-4zM99 30h1v1h-1zM103 30h5v1h-5zM111 30h2v1h-2zM118 30h2v1h-2zM3 31h3v1h-3zM10 31h13v1h-13zM25 31h1v1h-1zM29 31h3v1h-3zM35 31h2v1h-2zM40 31h3v1h-3zM47 31h3v1h-3zM52 31h1v1h-1zM56 31h2v1h-2zM62 31h1v1h-1zM64 31h2v1h-2zM69 31h5v1h-5zM78 31h2v1h-2zM84 31h3v1h-3zM91 31h4v1h-4zM96 31h12v1h-12zM110 31h5v1h-5zM118 31h2v1h-2zM2 32h3v1h-3zM6 32h1v1h-1zM10 32h6v1h-6zM21 32h5v1h-5zM30 32h2v1h-2zM33 32h1v1h-1zM35 32h3v1h-3zM40 32h1v1h-1zM48 32h1v1h-1zM52 32h1v1h-1zM57 32h1v1h-1zM59 32h6v1h-6zM67 32h6v1h-6zM76 32h4v1h-4zM84 32h3v1h-3zM88 32h1v1h-1zM90 32h1v1h-1zM92 32h1v1h-1zM95 32h9v1h-9zM105 32h1v1h-1zM107 32h1v1h-1zM110 32h6v1h-6zM118 32h2v1h-2zM2 33h2v1h-2zM5 33h4v1h-4zM12 33h4v1h-4zM18 33h8v1h-8zM30 33h3v1h-3zM35 33h4v1h-4zM41 33h6v1h-6zM51 33h5v1h-5zM60 33h1v1h-1zM63 33h2v1h-2zM67 33h7v1h-7zM76 33h1v1h-1zM78 33h1v1h-1zM84 33h6v1h-6zM91 33h1v1h-1zM97 33h2v1h-2zM100 33h3v1h-3zM108 33h1v1h-1zM110 33h5v1h-5zM118 33h1v1h-1zM0 34h1v1h-1zM2 34h2v1h-2zM5 34h5v1h-5zM12 34h4v1h-4zM18 34h4v1h-4zM24 34h2v1h-2zM27 34h1v1h-1zM30 34h1v1h-1zM36 34h3v1h-3zM40 34h2v1h-2zM43 34h4v1h-4zM50 34h5v1h-5zM56 34h1v1h-1zM59 34h1v1h-1zM63 34h2v1h-2zM67 34h4v1h-4zM72 34h2v1h-2zM80 34h3v1h-3zM87 34h4v1h-4zM96 34h8v1h-8zM111 34h5v1h-5zM117 34h3v1h-3zM0 35h6v1h-6zM8 35h3v1h-3zM12 35h4v1h-4zM18 35h2v1h-2zM21 35h4v1h-4zM30 35h3v1h-3zM37 35h1v1h-1zM45 35h2v1h-2zM48 35h5v1h-5zM63 35h3v1h-3zM67 35h3v1h-3zM72 35h4v1h-4zM80 35h3v1h-3zM84 35h1v1h-1zM87 35h3v1h-3zM97 35h6v1h-6zM105 35h1v1h-1zM107 35h2v1h-2zM112 35h5v1h-5zM118 35h1v1h-1zM0 36h1v1h-1zM2 36h4v1h-4zM8 36h4v1h-4zM17 36h2v1h-2zM21 36h1v1h-1zM23 36h2v1h-2zM30 36h2v1h-2zM36 36h2v1h-2zM45 36h1v1h-1zM47 36h6v1h-6zM56 36h1v1h-1zM59 36h1v1h-1zM63 36h7v1h-7zM72 36h4v1h-4zM77 36h1v1h-1zM79 36h5v1h-5zM87 36h2v1h-2zM94 36h1v1h-1zM96 36h1v1h-1zM98 36h1v1h-1zM101 36h2v1h-2zM113 36h3v1h-3zM118 36h2v1h-2zM4 37h2v1h-2zM8 37h4v1h-4zM17 37h1v1h-1zM22 37h3v1h-3zM30 37h2v1h-2zM36 37h2v1h-2zM45 37h1v1h-1zM51 37h1v1h-1zM53 37h1v1h-1zM57 37h1v1h-1zM59 37h10v1h-10zM70 37h3v1h-3zM78 37h1v1h-1zM83 37h1v1h-1zM91 37h2v1h-2zM98 37h1v1h-1zM102 37h2v1h-2zM105 37h1v1h-1zM110 37h1v1h-1zM113 37h3v1h-3zM117 37h3v1h-3zM8 38h1v1h-1zM10 38h1v1h-1zM14 38h1v1h-1zM21 38h3v1h-3zM27 38h6v1h-6zM34 38h1v1h-1zM36 38h2v1h-2zM40 38h1v1h-1zM42 38h3v1h-3zM61 38h2v1h-2zM65 38h8v1h-8zM74 38h1v1h-1zM79 38h1v1h-1zM83 38h2v1h-2zM86 38h3v1h-3zM90 38h3v1h-3zM98 38h1v1h-1zM102 38h3v1h-3zM109 38h2v1h-2zM113 38h3v1h-3zM3 39h1v1h-1zM6 39h1v1h-1zM8 39h2v1h-2zM11 39h1v1h-1zM14 39h3v1h-3zM18 39h6v1h-6zM28 39h3v1h-3zM34 39h1v1h-1zM36 39h2v1h-2zM40 39h1v1h-1zM43 39h3v1h-3zM48 39h2v1h-2zM53 39h4v1h-4zM59 39h4v1h-4zM65 39h4v1h-4zM70 39h4v1h-4zM75 39h3v1h-3zM80 39h1v1h-1zM83 39h1v1h-1zM85 39h4v1h-4zM91 39h1v1h-1zM100 39h5v1h-5zM113 39h2v1h-2zM3 40h6v1h-6zM10 40h1v1h-1zM14 40h2v1h-2zM17 40h5v1h-5zM23 40h2v1h-2zM27 40h2v1h-2zM30 40h1v1h-1zM37 40h8v1h-8zM48 40h2v1h-2zM51 40h6v1h-6zM59 40h4v1h-4zM65 40h2v1h-2zM70 40h3v1h-3zM74 40h1v1h-1zM76 40h3v1h-3zM83 40h1v1h-1zM85 40h4v1h-4zM90 40h8v1h-8zM99 40h7v1h-7zM112 40h1v1h-1zM114 40h1v1h-1zM117 40h1v1h-1zM0 41h1v1h-1zM2 41h5v1h-5zM8 41h4v1h-4zM14 41h2v1h-2zM18 41h1v1h-1zM20 41h2v1h-2zM23 41h2v1h-2zM30 41h1v1h-1zM32 41h1v1h-1zM34 41h1v1h-1zM37 41h4v1h-4zM42 41h1v1h-1zM45 41h1v1h-1zM52 41h5v1h-5zM59 41h1v1h-1zM65 41h2v1h-2zM70 41h2v1h-2zM73 41h1v1h-1zM76 41h4v1h-4zM82 41h2v1h-2zM86 41h6v1h-6zM94 41h4v1h-4zM99 41h7v1h-7zM108 41h1v1h-1zM110 41h4v1h-4zM1 42h8v1h-8zM10 42h2v1h-2zM27 42h1v1h-1zM30 42h2v1h-2zM33 42h1v1h-1zM37 42h2v1h-2zM53 42h7v1h-7zM65 42h8v1h-8zM78 42h4v1h-4zM87 42h2v1h-2zM90 42h3v1h-3zM94 42h2v1h-2zM97 42h1v1h-1zM99 42h1v1h-1zM102 42h3v1h-3zM107 42h3v1h-3zM111 42h2v1h-2zM114 42h1v1h-1zM117 42h1v1h-1zM2 43h5v1h-5zM18 43h1v1h-1zM27 43h1v1h-1zM30 43h5v1h-5zM38 43h1v1h-1zM41 43h2v1h-2zM44 43h1v1h-1zM46 43h2v1h-2zM53 43h4v1h-4zM58 43h3v1h-3zM64 43h1v1h-1zM66 43h1v1h-1zM78 43h4v1h-4zM84 43h1v1h-1zM87 43h5v1h-5zM94 43h8v1h-8zM103 43h1v1h-1zM108 43h1v1h-1zM110 43h5v1h-5zM116 43h1v1h-1zM1 44h6v1h-6zM8 44h1v1h-1zM13 44h2v1h-2zM17 44h3v1h-3zM21 44h1v1h-1zM26 44h9v1h-9zM37 44h6v1h-6zM44 44h4v1h-4zM53 44h3v1h-3zM60 44h1v1h-1zM63 44h3v1h-3zM70 44h3v1h-3zM78 44h4v1h-4zM83 44h3v1h-3zM87 44h4v1h-4zM94 44h7v1h-7zM104 44h1v1h-1zM108 44h2v1h-2zM111 44h5v1h-5zM117 44h1v1h-1z" fill="#9bb3de"/></pattern></defs><rect width="1920" height="45" fill="url(#nz)"/><rect width="1920" height="1" fill="#7f9c96"/></svg>
<svg class="b" style="left:19px;top:1050px" width="10" height="9" viewBox="0 0 10 9"><path d="M1 1 H8.4 L8.4 8 L5.4 4.6 Z" fill="#3b7de0"/></svg>
<svg class="b" style="left:27px;top:1052px" width="11" height="15" viewBox="0 0 11 15"><path d="M5.4 1.2 V9" stroke="#2a63cf" stroke-width="2.4" stroke-linecap="round"/><circle cx="5.4" cy="10.6" r="3.4" fill="#2458c4"/><circle cx="5.4" cy="10.8" r="1.4" fill="#10359a"/></svg>
<div class="b" style="left:28.6px;top:1040.8px;width:15.4px;height:15.4px;background:#b9321f;border-radius:50%"></div>
<span class="t" style="left:33.66px;top:1044.42px;font-size:9.5px;color:#f3d6cf">2</span>
<span class="t" style="left:48.4px;top:1043.62px;font-size:12.3px;color:#1a1a1a;transform:scaleX(0.899);transform-origin:0 50%">Cold days ahead</span>
<span class="t" style="left:48.4px;top:1059.42px;font-size:11.8px;color:#222;transform:scaleX(0.818);transform-origin:0 50%">18°F</span>
<svg class="b" style="left:720px;top:1046.5px" width="22.5" height="22.5" viewBox="0 0 22.5 22.5"><rect x="0" y="0" width="10.6" height="10.6" rx="1" fill="#2f86ee"/><rect x="11.8" y="0" width="10.6" height="10.6" rx="1" fill="#1e76e6"/><rect x="0" y="11.8" width="10.6" height="10.6" rx="1" fill="#1a6ad8"/><rect x="11.8" y="11.8" width="10.6" height="10.6" rx="1" fill="#0f5cc8"/></svg>
<div class="b" style="left:755.5px;top:1043px;width:204px;height:29px;background:#d6fbfa;border-radius:14.5px;box-shadow:0 0 0 0.6px rgba(110,160,170,0.45)"></div>
<svg class="b" style="left:764px;top:1048px" width="17" height="17" viewBox="0 0 17 17"><circle cx="6.8" cy="6.8" r="4.9" fill="none" stroke="#1a1a1a" stroke-width="1.9"/><path d="M10.6 10.6 L15 15" stroke="#1a1a1a" stroke-width="2.1" stroke-linecap="round"/></svg>
<span class="t" style="left:789.4px;top:1051.62px;font-size:13.2px;color:#222;transform:scaleX(0.909);transform-origin:0 50%">Search</span>
<svg class="b" style="left:915px;top:1045px" width="36" height="27" viewBox="0 0 36 27"><ellipse cx="18" cy="17.6" rx="16.4" ry="7.4" fill="#b9aea3"/><ellipse cx="18" cy="15.6" rx="14.2" ry="8.2" fill="#c9661f"/><ellipse cx="18" cy="12.4" rx="13.6" ry="8.4" fill="#ee9a3c"/><ellipse cx="18" cy="11" rx="10.6" ry="6" fill="#f5b865"/><ellipse cx="18" cy="11.4" rx="5.4" ry="2.7" fill="#b35a1c"/><ellipse cx="18" cy="12.2" rx="3.6" ry="1.5" fill="#e9a050"/></svg>
<svg class="b" style="left:971px;top:1046px" width="25" height="23" viewBox="0 0 25 23"><rect x="9.4" y="1" width="14" height="13" rx="1.6" fill="#e7e7ea"/><path d="M9.4 14 L23.4 1 V12.4 Q23.4 14 21.8 14 Z" fill="#bdbdc3"/><rect x="1" y="7.6" width="15.6" height="14.4" rx="1.6" fill="#141414"/></svg>
<svg class="b" style="left:1012px;top:1046px" width="25" height="23" viewBox="0 0 25 23"><path d="M1 3.4 Q1 1.4 3 1.4 H8.4 L10.8 3.8 H22 Q24 3.8 24 5.8 V8 H1 Z" fill="#e79b2c"/><rect x="1" y="5.6" width="23" height="15.8" rx="1.6" fill="#f7b43c"/><path d="M1 14 H24 V19.8 Q24 21.4 22.4 21.4 H2.6 Q1 21.4 1 19.8 Z" fill="#f0a22e"/><rect x="5.4" y="14.6" width="14.2" height="6.8" rx="1" fill="#1b66cf"/><rect x="8" y="16.8" width="9" height="2" fill="#0b3f94"/></svg>
<svg class="b" style="left:1054px;top:1045px" width="24" height="25" viewBox="0 0 24 25"><ellipse cx="12" cy="12.4" rx="11" ry="11.6" fill="#e0281b"/><ellipse cx="12" cy="12.4" rx="4.8" ry="8.4" fill="#9bb9dd"/><path d="M15 2 C21 4 23 9 23 12.4 C23 16 21 21 15 23 C19 20 19.6 16 19.6 12.4 C19.6 9 19 5 15 2 Z" fill="#a8140f"/></svg>
<div class="b" style="left:1061.5px;top:1073.5px;width:9px;height:2.4px;background:#5d6b73;border-radius:1.2px"></div>
<svg class="b" style="left:1095px;top:1045px" width="27" height="26" viewBox="0 0 27 26"><rect x="2" y="2" width="15" height="15" rx="2" fill="#ececf1" stroke="#c92f1f" stroke-width="1.7" stroke-dasharray="2.6 1.7"/><path d="M8 9 L18.6 20.6 M14.8 9 L13.2 20.8" stroke="#8e9096" stroke-width="1.7"/><circle cx="22.4" cy="15.2" r="2.3" fill="none" stroke="#1e78e0" stroke-width="1.5"/><circle cx="13.4" cy="22.4" r="2.3" fill="none" stroke="#1e78e0" stroke-width="1.5"/></svg>
<svg class="b" style="left:1134px;top:1045px" width="26" height="25" viewBox="0 0 26 25"><rect x="5.6" y="1.4" width="19" height="21.6" rx="2" fill="#1f6f3c"/><rect x="5.6" y="1.4" width="19" height="6" rx="2" fill="#2f9450"/><rect x="5.6" y="15" width="19" height="8" rx="2" fill="#154f2a"/><rect x="1" y="7" width="12.6" height="12.6" rx="1.6" fill="#0d3d1e"/><path d="M4.6 10 L10 16.6 M10 10 L4.6 16.6" stroke="#fff" stroke-width="1.5"/></svg>
<div class="b" style="left:1142px;top:1073.5px;width:9px;height:2.4px;background:#5d6b73;border-radius:1.2px"></div>
<svg class="b" style="left:1177px;top:1045px" width="26" height="25" viewBox="0 0 26 25"><rect x="1" y="1.4" width="23.6" height="22" rx="1.6" fill="#8a2b1e"/><path d="M1 1.4 H12 L10 10 L1 12 Z" fill="#d0432b"/><path d="M12 1.4 H24.6 V9 L14 11 Z" fill="#1f5aa8"/><path d="M1 12 L10 10 L12 23.4 H1 Z" fill="#2a7a3c"/><path d="M14 11 L24.6 9 V23.4 H12 Z" fill="#c23a24"/><path d="M9 4 L16 20" stroke="#3a2a1e" stroke-width="1.6"/></svg>
<div class="b" style="left:1185px;top:1073.5px;width:9px;height:2.4px;background:#5d6b73;border-radius:1.2px"></div>
<svg class="b" style="left:1768px;top:1052px" width="14" height="10" viewBox="0 0 14 10"><path d="M2 7.4 L7 2.4 L12 7.4" fill="none" stroke="#1a1a1a" stroke-width="1.7" stroke-linecap="round" stroke-linejoin="round"/></svg>
<svg class="b" style="left:1796px;top:1049px" width="18" height="18" viewBox="0 0 18 18"><rect x="1.2" y="2.4" width="11.2" height="9.6" fill="none" stroke="#1a1a1a" stroke-width="1.4"/><path d="M4 15.4 H13.4 M6.8 12.4 V15" stroke="#1a1a1a" stroke-width="1.4"/><rect x="11.4" y="1" width="3.6" height="4.6" rx="0.8" fill="#9bd0d8" stroke="#1a1a1a" stroke-width="1.1"/><path d="M13.2 5.6 V15.4" stroke="#1a1a1a" stroke-width="1.3"/></svg>
<svg class="b" style="left:1818px;top:1049px" width="18" height="16" viewBox="0 0 18 16"><path d="M1.6 5.6 H4.6 L8.4 2 V14 L4.6 10.4 H1.6 Z" fill="none" stroke="#1a1a1a" stroke-width="1.25" stroke-linejoin="round"/><path d="M10.6 5.4 C11.6 7 11.6 9 10.6 10.6 M12.8 3.6 C14.6 6.4 14.6 9.6 12.8 12.4" fill="none" stroke="#1a1a1a" stroke-width="1.2" stroke-linecap="round"/><path d="M15 2.2 C17.2 6 17.2 10 15 13.8" fill="none" stroke="#7f97a8" stroke-width="1.1" stroke-linecap="round"/></svg>
<span class="t" style="right:18px;top:1043.62px;font-size:12.3px;color:#111;transform:scaleX(0.873);transform-origin:100% 50%">3:48 PM</span>
<span class="t" style="right:18px;top:1058.82px;font-size:12.3px;color:#111;transform:scaleX(0.941);transform-origin:100% 50%">1/15/2026</span>
</body></html>
